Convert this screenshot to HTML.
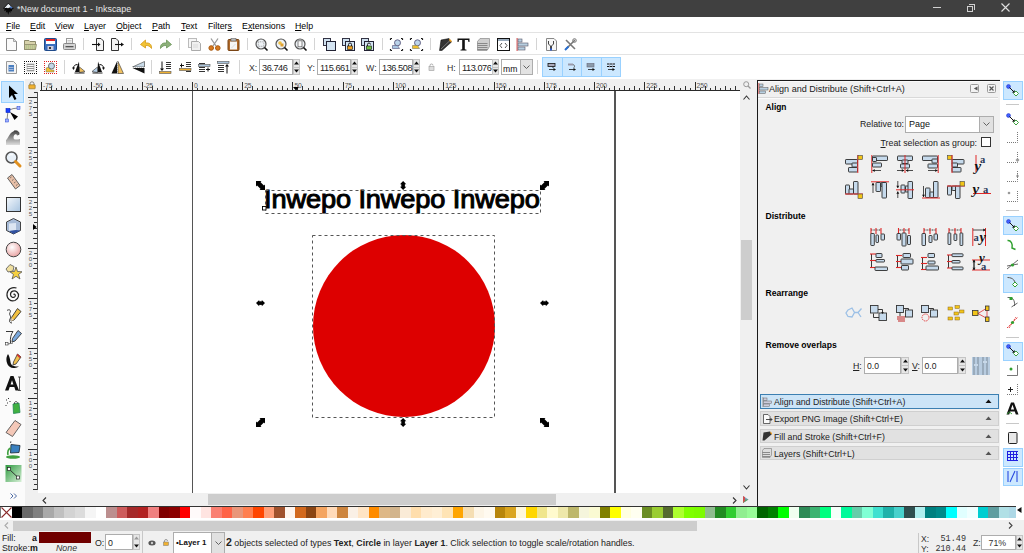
<!DOCTYPE html>
<html><head><meta charset="utf-8"><style>
*{margin:0;padding:0;box-sizing:border-box}
html,body{width:1024px;height:553px;overflow:hidden;background:#f0f0f0;font-family:"Liberation Sans",sans-serif;font-size:8.8px;color:#000}
.a{position:absolute}
svg{position:absolute;overflow:visible}
#title{left:0;top:0;width:1024px;height:17px;background:#404040}
#menu{left:0;top:17px;width:1024px;height:16px;background:#fff;border-bottom:1px solid #e3e3e3}
.mi{position:absolute;top:4px;white-space:nowrap;line-height:10px}
u{text-decoration:underline;text-underline-offset:1px}
#tb1{left:0;top:33px;width:1024px;height:22px;background:#fff;border-bottom:1px solid #e3e3e3}
#tb2{left:0;top:55px;width:1024px;height:24px;background:#fff}
.sep{position:absolute;width:1px;background:#d4d4d4}
#toolbox{left:0;top:79px;width:25px;height:427px;background:#fbfbfb}
#hruler{left:25px;top:79px;width:715px;height:12px;background:#f0f0f0}
#vruler{left:25px;top:91px;width:13px;height:402px;background:#f0f0f0}
#canvas{left:38px;top:91px;width:702px;height:402px;background:#fff;overflow:hidden}
#hscroll{left:25px;top:493px;width:731px;height:13px;background:#f0f0f0}
#vscroll{left:740px;top:79px;width:16px;height:414px;background:#f0f0f0}
#dock{left:756px;top:80px;width:244px;height:426px;background:#f0f0f0}
#snapbar{left:1000px;top:79px;width:24px;height:427px;background:#fff}
#palette{left:0;top:506px;width:1024px;height:14px;background:#fff}
#pscroll{left:0;top:520px;width:1024px;height:11px;background:#f0f0f0}
#status{left:0;top:531px;width:1024px;height:22px;background:#f0f0f0}
.sw{position:absolute;top:1px;height:11px}
.t{position:absolute;white-space:nowrap;line-height:10px}
.b{font-weight:bold}
</style></head><body>
<div id="title" class="a">
<svg style="left:1px;top:1px" width="15" height="15" viewBox="0 0 15 15"><path d="M7.3 2L12.8 7.3L11.5 8.6L11 8.3V10.5L9.8 9.8L9.3 12L8.2 10.5L7.3 14L6.3 10.8L4.8 11.8L5.2 9.3L3.2 10.2L3.6 8.2L2 7.3Z" fill="#050505"/><path d="M7.3 2.8L11.6 6.8L10 7.2L8.5 6.5L7 7.3L5.5 6.8L3.2 7.2Z" fill="#e8eef4"/><path d="M9.2 5L11.8 7L10.2 7.6L9 7Z" fill="#3a6ac0"/></svg>
<div class="t" style="left:17px;top:4px;color:#e6e6e6;font-size:8.95px">*New document 1 - Inkscape</div>
<div class="a" style="left:933px;top:7px;width:8px;height:1px;background:#d0d0d0"></div>
<div class="a" style="left:969px;top:4px;width:6px;height:6px;border:1px solid #d0d0d0;border-left:0;border-bottom:0"></div>
<div class="a" style="left:967px;top:6px;width:6px;height:6px;border:1px solid #d0d0d0"></div>
<svg style="left:1001px;top:3px" width="9" height="9" viewBox="0 0 9 9"><path d="M.5 .5L8.5 8.5M8.5 .5L.5 8.5" stroke="#e0e0e0" stroke-width="1.1"/></svg>
</div>
<div id="menu" class="a">
<span class="mi" style="left:6px"><u>F</u>ile</span>
<span class="mi" style="left:30px"><u>E</u>dit</span>
<span class="mi" style="left:55px"><u>V</u>iew</span>
<span class="mi" style="left:84px"><u>L</u>ayer</span>
<span class="mi" style="left:116px"><u>O</u>bject</span>
<span class="mi" style="left:152px"><u>P</u>ath</span>
<span class="mi" style="left:181px"><u>T</u>ext</span>
<span class="mi" style="left:208px">Filter<u>s</u></span>
<span class="mi" style="left:242px">E<u>x</u>tensions</span>
<span class="mi" style="left:295px"><u>H</u>elp</span>
</div>
<div id="tb1" class="a">
<svg style="left:5px;top:5px" width="13" height="13" viewBox="0 0 13 13"><path d="M1.5 .5H8.5L11.5 3.5V12.5H1.5Z" fill="#fbfbfb" stroke="#8a8a8a"/><path d="M8.5 .5V3.5H11.5" fill="#ddd" stroke="#8a8a8a" stroke-width=".7"/></svg>
<svg style="left:24px;top:5px" width="13" height="13" viewBox="0 0 13 13"><path d="M.5 2.5H5L6 3.5H11.5V11.5H.5Z" fill="#d8d3ac" stroke="#8c8a6a"/><path d="M.5 6.5H12.5L11.5 11.5H.5Z" fill="#c9c79b" stroke="#8c8a6a" stroke-width=".8"/><path d="M2 8h9M2 10h9" stroke="#9bc27a" stroke-width=".8" stroke-dasharray="1 1"/></svg>
<svg style="left:44px;top:5px" width="13" height="13" viewBox="0 0 13 13"><rect x=".5" y=".5" width="12" height="12" rx="1" fill="#3b6fbf" stroke="#1f4a8a"/><rect x="2" y="1" width="9" height="5" fill="#fff"/><rect x="2" y="1" width="9" height="2" fill="#e02020"/><rect x="3.5" y="8" width="6" height="4" fill="#ccd"/><rect x="5" y="9" width="2" height="2" fill="#333"/></svg>
<svg style="left:63px;top:5px" width="13" height="13" viewBox="0 0 13 13"><rect x="3.5" y=".5" width="6" height="5" fill="#fafafa" stroke="#999"/><path d="M4.5 2.5h4M4.5 4h4" stroke="#aaa" stroke-width=".6"/><rect x=".5" y="5.5" width="12" height="6" rx="1" fill="#d4d4d4" stroke="#888"/><rect x="2.5" y="8" width="8" height="1.3" fill="#555"/></svg>
<svg style="left:92px;top:5px" width="13" height="13" viewBox="0 0 13 13"><path d="M4.5 .5H9L11.5 3V12.5H4.5Z" fill="#f4f4f4" stroke="#333"/><path d="M0 6.5H7.5" stroke="#111" stroke-width="1.1"/><path d="M6 4.5L8.5 6.5L6 8.5Z" fill="#111"/></svg>
<svg style="left:111px;top:5px" width="13" height="13" viewBox="0 0 13 13"><path d="M.5 .5H5L7.5 3V12.5H.5Z" fill="#f4f4f4" stroke="#333"/><path d="M4 6.5H11.5" stroke="#111" stroke-width="1.1"/><path d="M10 4.5L13 6.5L10 8.5Z" fill="#111"/></svg>
<svg style="left:140px;top:5px" width="13" height="13" viewBox="0 0 13 13"><path d="M11.5 10.5C12 6 9 4.5 5.5 5V2L.5 6.5L5.5 10V7.5C8 7.3 9.8 8 11.5 10.5Z" fill="#f2c335" stroke="#d49a1a" stroke-width=".8"/></svg>
<svg style="left:159px;top:5px" width="13" height="13" viewBox="0 0 13 13"><path d="M1.5 10.5C1 6 4 4.5 7.5 5V2L12.5 6.5L7.5 10V7.5C5 7.3 3.2 8 1.5 10.5Z" fill="#8db07a" stroke="#6b9559" stroke-width=".8"/></svg>
<svg style="left:188px;top:5px" width="13" height="13" viewBox="0 0 13 13"><rect x=".5" y=".5" width="8" height="9" fill="#f6f6f6" stroke="#bbb"/><path d="M3.5 3.5H10.5L12.5 5.5V12.5H3.5Z" fill="#f0f0f0" stroke="#aaa"/><path d="M5 7h5M5 9h5" stroke="#ccc" stroke-width=".6"/></svg>
<svg style="left:208px;top:5px" width="13" height="13" viewBox="0 0 13 13"><path d="M3 .5L8 8M10 .5L5 8" stroke="#9a9a9a" stroke-width="1.3"/><circle cx="3.2" cy="10" r="2.3" fill="#d87a20" stroke="#a85a10"/><circle cx="9.8" cy="10" r="2.3" fill="#d87a20" stroke="#a85a10"/></svg>
<svg style="left:227px;top:5px" width="13" height="13" viewBox="0 0 13 13"><rect x="1" y="1.5" width="11" height="11" rx="1" fill="#b06a2a" stroke="#7a4515"/><rect x="3" y="3.5" width="7" height="8" fill="#f6f6f6"/><rect x="4" y=".5" width="5" height="2.5" fill="#bbb" stroke="#666" stroke-width=".6"/><path d="M4.5 10L8.5 6" stroke="#ccc" stroke-width=".6"/></svg>
<svg style="left:255px;top:5px" width="13" height="13" viewBox="0 0 13 13"><circle cx="6" cy="6" r="5" fill="#eef2f6" stroke="#555" stroke-width="1.2"/><rect x="3.3" y="3.8" width="5.5" height="4.5" fill="none" stroke="#777" stroke-width=".6" stroke-dasharray="1 .7"/><path d="M9.5 9.5L12.5 12.5" stroke="#111" stroke-width="1.6"/></svg>
<svg style="left:274.5px;top:5px" width="13" height="13" viewBox="0 0 13 13"><circle cx="6" cy="6" r="5" fill="#eef2f6" stroke="#555" stroke-width="1.2"/><circle cx="5" cy="5" r="1.8" fill="#f0c040"/><rect x="5.5" y="5.5" width="3" height="3" fill="#e0a030"/><path d="M9.5 9.5L12.5 12.5" stroke="#111" stroke-width="1.6"/></svg>
<svg style="left:294px;top:5px" width="13" height="13" viewBox="0 0 13 13"><circle cx="6" cy="6" r="5" fill="#eef2f6" stroke="#555" stroke-width="1.2"/><rect x="4" y="2.8" width="4" height="6" fill="#fafafa" stroke="#555" stroke-width=".7"/><path d="M9.5 9.5L12.5 12.5" stroke="#111" stroke-width="1.6"/></svg>
<svg style="left:323px;top:5px" width="13" height="13" viewBox="0 0 13 13"><rect x=".5" y=".5" width="7" height="7" fill="#cfe0ef" stroke="#334"/><rect x="3.5" y="3.5" width="9" height="9" fill="#d4e4f2" stroke="#223"/></svg>
<svg style="left:342px;top:5px" width="13" height="13" viewBox="0 0 13 13"><rect x=".5" y=".5" width="7" height="7" fill="#cfe0ef" stroke="#334"/><rect x="3.5" y="3.5" width="9" height="9" fill="#d4e4f2" stroke="#223"/><path d="M6.5 8V6.5a1.5 1.5 0 0 1 3 0V8" fill="none" stroke="#111" stroke-width=".9"/><rect x="5.5" y="8" width="5" height="3.5" fill="#f0a020" stroke="#111" stroke-width=".6"/></svg>
<svg style="left:361px;top:5px" width="13" height="13" viewBox="0 0 13 13"><rect x=".5" y=".5" width="7" height="7" fill="#cfe0ef" stroke="#334"/><rect x="3.5" y="3.5" width="9" height="9" fill="#d4e4f2" stroke="#223"/><path d="M6.5 8V6.5a1.5 1.5 0 0 1 3 0" fill="none" stroke="#111" stroke-width=".9"/><rect x="5.5" y="8" width="5" height="3.5" fill="#70c040" stroke="#111" stroke-width=".6"/></svg>
<svg style="left:390px;top:5px" width="13" height="13" viewBox="0 0 13 13"><path d="M.5 .5h1.5M.5 .5v1.5M12.5 .5h-1.5M12.5 .5v1.5M.5 12.5h1.5M.5 12.5v-1.5M12.5 12.5h-1.5M12.5 12.5v-1.5" stroke="#111" stroke-width="1.2"/><circle cx="7.5" cy="4.8" r="3" fill="#bcd4ea" stroke="#668"/><path d="M2.5 7.5H7.5L9.5 10.5H2.5Z" fill="#a9c6e2" stroke="#668" stroke-width=".7"/></svg>
<svg style="left:410px;top:5px" width="13" height="13" viewBox="0 0 13 13"><path d="M.5 .5h1.5M.5 .5v1.5M12.5 .5h-1.5M12.5 .5v1.5M.5 12.5h1.5M.5 12.5v-1.5M12.5 12.5h-1.5M12.5 12.5v-1.5" stroke="#111" stroke-width="1.2"/><circle cx="7.5" cy="4.8" r="3" fill="#bcd4ea" stroke="#668"/><path d="M2.5 7.5H7.5L9.5 10.5H2.5Z" fill="#f0c030" stroke="#886" stroke-width=".7"/></svg>
<svg style="left:438.6px;top:5px" width="13" height="13" viewBox="0 0 13 13"><path d="M.5 12.5L2 2L10 .5L12.5 4L3 12.5Z" fill="#333" stroke="#000" stroke-width=".5"/><path d="M2 11L11 2.5" stroke="#fff" stroke-width=".6" opacity=".6"/><path d="M10 .5L12.5 2.5L12.5 4.5L10.5 3Z" fill="#f0a020"/></svg>
<svg style="left:457px;top:5px" width="13" height="13" viewBox="0 0 13 13"><path d="M.5 .5H12.5V4H11.5L11 2H7.8V11.2L9.5 11.8V12.5H3.5V11.8L5.2 11.2V2H2L1.5 4H.5Z" fill="#111"/></svg>
<svg style="left:477px;top:5px" width="13" height="13" viewBox="0 0 13 13"><path d="M.5 3.5L3 .5H12.5V8.5L10 12.5H.5Z" fill="#cfcfcf" stroke="#888" stroke-width=".7"/><path d="M.5 5.5H10.5M.5 7.5H10.5M.5 9.5H10.5M.5 11.5H10.5" stroke="#777" stroke-width=".8"/></svg>
<svg style="left:496.7px;top:5px" width="13" height="13" viewBox="0 0 13 13"><rect x=".5" y=".5" width="12" height="12" fill="#fff" stroke="#111"/><rect x="1" y="1" width="11" height="2" fill="#9ab"/><path d="M5 5L3 7.5L5 10M8 5L10 7.5L8 10" fill="none" stroke="#555" stroke-width="1"/></svg>
<svg style="left:516px;top:5px" width="13" height="13" viewBox="0 0 13 13"><rect x=".5" y="0" width="1.2" height="13" fill="#e06060"/><rect x="2" y="1" width="4" height="3" fill="#b8cfe0" stroke="#556" stroke-width=".6"/><rect x="2" y="5" width="10" height="3" fill="#b8cfe0" stroke="#556" stroke-width=".6"/><rect x="2" y="9" width="7" height="3" fill="#b8cfe0" stroke="#556" stroke-width=".6"/></svg>
<svg style="left:545px;top:5px" width="13" height="13" viewBox="0 0 13 13"><path d="M1.5 .5H9L11.5 3V12.5H1.5Z" fill="#f6f6f6" stroke="#888"/><path d="M3.5 3V6L5.5 8V12M8.5 3V6L6.5 8V12" fill="none" stroke="#444" stroke-width="1"/><path d="M5 10.5h2v2h-2z" fill="#2a5bd0"/></svg>
<svg style="left:564px;top:5px" width="13" height="13" viewBox="0 0 13 13"><path d="M2 2L11 11M11 2L2 11" stroke="#777" stroke-width="1.6"/><circle cx="10.5" cy="2.5" r="1.8" fill="none" stroke="#777" stroke-width="1"/><path d="M1 12L4.5 8.5" stroke="#2a6fd0" stroke-width="2"/></svg>
<div class="sep" style="left:83px;top:5px;height:12px"></div>
<div class="sep" style="left:131px;top:5px;height:12px"></div>
<div class="sep" style="left:179px;top:5px;height:12px"></div>
<div class="sep" style="left:247px;top:5px;height:12px"></div>
<div class="sep" style="left:314px;top:5px;height:12px"></div>
<div class="sep" style="left:382px;top:5px;height:12px"></div>
<div class="sep" style="left:430px;top:5px;height:12px"></div>
<div class="sep" style="left:536px;top:5px;height:12px"></div>
</div>
<div id="tb2" class="a">
<svg style="left:5px;top:6px" width="13" height="13" viewBox="0 0 13 13"><path d="M1.5 .5H8.5L11.5 3.5V12.5H1.5Z" fill="#f4f4f4" stroke="#999"/><rect x="3.5" y="4" width="5.5" height="6.5" fill="#4a7fc0"/><path d="M4 6.5h4.5M4 8.5h4.5" stroke="#dde" stroke-width=".6"/></svg>
<svg style="left:24px;top:6px" width="13" height="13" viewBox="0 0 13 13"><rect x="1" y="1" width="11" height="11" fill="#fafafa"/><rect x="0" y="0" width="1" height="1" fill="#111"/><rect x="0" y="12" width="1" height="1" fill="#111"/><rect x="0" y="0" width="1" height="1" fill="#111"/><rect x="12" y="0" width="1" height="1" fill="#111"/><rect x="2" y="0" width="1" height="1" fill="#111"/><rect x="2" y="12" width="1" height="1" fill="#111"/><rect x="0" y="2" width="1" height="1" fill="#111"/><rect x="12" y="2" width="1" height="1" fill="#111"/><rect x="4" y="0" width="1" height="1" fill="#111"/><rect x="4" y="12" width="1" height="1" fill="#111"/><rect x="0" y="4" width="1" height="1" fill="#111"/><rect x="12" y="4" width="1" height="1" fill="#111"/><rect x="6" y="0" width="1" height="1" fill="#111"/><rect x="6" y="12" width="1" height="1" fill="#111"/><rect x="0" y="6" width="1" height="1" fill="#111"/><rect x="12" y="6" width="1" height="1" fill="#111"/><rect x="8" y="0" width="1" height="1" fill="#111"/><rect x="8" y="12" width="1" height="1" fill="#111"/><rect x="0" y="8" width="1" height="1" fill="#111"/><rect x="12" y="8" width="1" height="1" fill="#111"/><rect x="10" y="0" width="1" height="1" fill="#111"/><rect x="10" y="12" width="1" height="1" fill="#111"/><rect x="0" y="10" width="1" height="1" fill="#111"/><rect x="12" y="10" width="1" height="1" fill="#111"/><rect x="12" y="0" width="1" height="1" fill="#111"/><rect x="12" y="12" width="1" height="1" fill="#111"/><rect x="0" y="12" width="1" height="1" fill="#111"/><rect x="12" y="12" width="1" height="1" fill="#111"/><path d="M3 3.5h7M3 5.5h7M3 7.5h7M3 9.5h7" stroke="#888" stroke-width=".9"/><rect x="3" y="3" width="7" height="7" fill="none" stroke="#999" stroke-width=".6"/></svg>
<svg style="left:44px;top:6px" width="13" height="13" viewBox="0 0 13 13"><rect x="1" y="1" width="11" height="11" fill="#fff"/><rect x="0" y="0" width="1" height="1" fill="#e02020"/><rect x="0" y="12" width="1" height="1" fill="#e02020"/><rect x="0" y="0" width="1" height="1" fill="#e02020"/><rect x="12" y="0" width="1" height="1" fill="#e02020"/><rect x="2" y="0" width="1" height="1" fill="#e02020"/><rect x="2" y="12" width="1" height="1" fill="#e02020"/><rect x="0" y="2" width="1" height="1" fill="#e02020"/><rect x="12" y="2" width="1" height="1" fill="#e02020"/><rect x="4" y="0" width="1" height="1" fill="#e02020"/><rect x="4" y="12" width="1" height="1" fill="#e02020"/><rect x="0" y="4" width="1" height="1" fill="#e02020"/><rect x="12" y="4" width="1" height="1" fill="#e02020"/><rect x="6" y="0" width="1" height="1" fill="#e02020"/><rect x="6" y="12" width="1" height="1" fill="#e02020"/><rect x="0" y="6" width="1" height="1" fill="#e02020"/><rect x="12" y="6" width="1" height="1" fill="#e02020"/><rect x="8" y="0" width="1" height="1" fill="#e02020"/><rect x="8" y="12" width="1" height="1" fill="#e02020"/><rect x="0" y="8" width="1" height="1" fill="#e02020"/><rect x="12" y="8" width="1" height="1" fill="#e02020"/><rect x="10" y="0" width="1" height="1" fill="#e02020"/><rect x="10" y="12" width="1" height="1" fill="#e02020"/><rect x="0" y="10" width="1" height="1" fill="#e02020"/><rect x="12" y="10" width="1" height="1" fill="#e02020"/><rect x="12" y="0" width="1" height="1" fill="#e02020"/><rect x="12" y="12" width="1" height="1" fill="#e02020"/><rect x="0" y="12" width="1" height="1" fill="#e02020"/><rect x="12" y="12" width="1" height="1" fill="#e02020"/><path d="M2 7L5 6L7 9H10V11H2Z" fill="#f0c030" stroke="#777" stroke-width=".5"/><circle cx="7.5" cy="5" r="3" fill="#c4d8ea" stroke="#555" stroke-width=".8"/></svg>
<svg style="left:72px;top:6px" width="13" height="13" viewBox="0 0 13 13"><path d="M7 .5L7.5 11H3Z" fill="#111"/><path d="M7.5 6L13 10.5L7.5 11.5Z" fill="#f0c060" stroke="#333" stroke-width=".6"/><path d="M5.5 3.5C3 3.5 1.5 5 1.5 7" fill="none" stroke="#111" stroke-width="1"/><path d="M0 6.5H3L1.5 9Z" fill="#111"/><path d="M2.5 12H12.5" stroke="#222" stroke-width="1"/></svg>
<svg style="left:92px;top:6px" width="13" height="13" viewBox="0 0 13 13"><path d="M6 .5L5.5 11H10Z" fill="#111"/><path d="M5.5 6L0 10.5L5.5 11.5Z" fill="#b8d2ea" stroke="#333" stroke-width=".6"/><path d="M7.5 3.5C10 3.5 11.5 5 11.5 7" fill="none" stroke="#111" stroke-width="1"/><path d="M10 6.5H13L11.5 9Z" fill="#111"/><path d="M.5 12H10.5" stroke="#222" stroke-width="1"/></svg>
<svg style="left:111px;top:6px" width="13" height="13" viewBox="0 0 13 13"><path d="M6 .5L6 12.5H.5Z" fill="#111"/><path d="M7 .5L7 12.5H12.5Z" fill="#f0c060" stroke="#333" stroke-width=".6"/><path d="M6.5 0v13" stroke="#777" stroke-width=".6" stroke-dasharray="1 1"/></svg>
<svg style="left:132px;top:6px" width="13" height="13" viewBox="0 0 13 13"><path d="M12.5 .5V6H.5Z" fill="#c9dbe9" stroke="#333" stroke-width=".6"/><path d="M12.5 12.5V7H.5Z" fill="#111"/><path d="M0 6.5h13" stroke="#fff" stroke-width=".8" stroke-dasharray="1 1"/></svg>
<svg style="left:159px;top:6px" width="13" height="13" viewBox="0 0 13 13"><path d="M3 .5V9" stroke="#111" stroke-width="1"/><path d="M1 7.5h4L3 10z" fill="#111"/><path d="M7 1.5h5M7 3.5h5M7 5.5h5M7 7.5h5" stroke="#333" stroke-width="1.1"/><rect x=".5" y="10.5" width="11.5" height="2" fill="#f0b030" stroke="#555" stroke-width=".6"/></svg>
<svg style="left:179px;top:6px" width="13" height="13" viewBox="0 0 13 13"><path d="M1 4.5h4" stroke="#111"/><path d="M2.5 2.5v4" stroke="#111"/><path d="M7 1.5h5M7 3.5h5M7 5.5h5M7 10.5h5" stroke="#333" stroke-width="1.1"/><rect x=".5" y="7.5" width="11.5" height="2" fill="#f0b030" stroke="#555" stroke-width=".6"/></svg>
<svg style="left:198px;top:6px" width="13" height="13" viewBox="0 0 13 13"><path d="M8 8.5h4" stroke="#111"/><path d="M10 6.5v4" stroke="#111"/><path d="M1 2.5h6M1 6.5h6M1 8.5h6M1 10.5h6" stroke="#333" stroke-width="1.1"/><rect x=".5" y="3.5" width="11.5" height="2" fill="#aac4dc" stroke="#555" stroke-width=".6"/></svg>
<svg style="left:217px;top:6px" width="13" height="13" viewBox="0 0 13 13"><path d="M10 4V12.5" stroke="#111" stroke-width="1"/><path d="M8 5.5h4L10 3z" fill="#111"/><path d="M1 4.5h6M1 6.5h6M1 8.5h6M1 10.5h6" stroke="#333" stroke-width="1.1"/><rect x=".5" y=".5" width="11.5" height="2" fill="#aac4dc" stroke="#555" stroke-width=".6"/></svg>
<div class="sep" style="left:64px;top:5px;height:14px"></div>
<div class="sep" style="left:151px;top:5px;height:14px"></div>
<div class="sep" style="left:239px;top:5px;height:14px"></div>
<div class="sep" style="left:537px;top:5px;height:14px"></div>
<div class="t" style="left:249px;top:8px;color:#333">X:</div>
<div class="a" style="left:259px;top:4px;width:34px;height:16px;background:#fff;border:1px solid #adadad"></div><div class="t" style="left:262px;top:8px;font-size:9.2px;color:#222;letter-spacing:-.45px">36.746</div>
<div class="a" style="left:293px;top:4px;width:7px;height:16px;background:#e6e6e6;border:1px solid #c4c4c4"></div><div class="a" style="left:293px;top:12px;width:7px;height:1px;background:#c4c4c4"></div><svg style="left:294px;top:6px" width="5" height="4" viewBox="0 0 5 4"><path d="M2.5 .5L5 3.5H0Z" fill="#111"/></svg><svg style="left:294px;top:14px" width="5" height="4" viewBox="0 0 5 4"><path d="M2.5 3.5L5 .5H0Z" fill="#111"/></svg>
<div class="t" style="left:307px;top:8px;color:#333">Y:</div>
<div class="a" style="left:317px;top:4px;width:34px;height:16px;background:#fff;border:1px solid #adadad"></div><div class="t" style="left:320px;top:8px;font-size:9.2px;color:#222;letter-spacing:-.45px">115.661</div>
<div class="a" style="left:351px;top:4px;width:7px;height:16px;background:#e6e6e6;border:1px solid #c4c4c4"></div><div class="a" style="left:351px;top:12px;width:7px;height:1px;background:#c4c4c4"></div><svg style="left:352px;top:6px" width="5" height="4" viewBox="0 0 5 4"><path d="M2.5 .5L5 3.5H0Z" fill="#111"/></svg><svg style="left:352px;top:14px" width="5" height="4" viewBox="0 0 5 4"><path d="M2.5 3.5L5 .5H0Z" fill="#111"/></svg>
<div class="t" style="left:366px;top:8px;color:#333">W:</div>
<div class="a" style="left:379px;top:4px;width:34px;height:16px;background:#fff;border:1px solid #adadad"></div><div class="t" style="left:382px;top:8px;font-size:9.2px;color:#222;letter-spacing:-.45px">136.508</div>
<div class="a" style="left:413px;top:4px;width:7px;height:16px;background:#e6e6e6;border:1px solid #c4c4c4"></div><div class="a" style="left:413px;top:12px;width:7px;height:1px;background:#c4c4c4"></div><svg style="left:414px;top:6px" width="5" height="4" viewBox="0 0 5 4"><path d="M2.5 .5L5 3.5H0Z" fill="#111"/></svg><svg style="left:414px;top:14px" width="5" height="4" viewBox="0 0 5 4"><path d="M2.5 3.5L5 .5H0Z" fill="#111"/></svg>
<svg style="left:428px;top:8px" width="7" height="8" viewBox="0 0 7 8"><path d="M2 3.5V2.5a1.5 1.5 0 0 1 3 0" fill="none" stroke="#999" stroke-width=".8"/><rect x="1" y="3.5" width="5" height="4" fill="#ddd" stroke="#999" stroke-width=".6"/></svg>
<div class="t" style="left:447px;top:8px;color:#333">H:</div>
<div class="a" style="left:459px;top:4px;width:34px;height:16px;background:#fff;border:1px solid #adadad"></div><div class="t" style="left:462px;top:8px;font-size:9.2px;color:#222;letter-spacing:-.45px">113.076</div>
<div class="a" style="left:492px;top:4px;width:7px;height:16px;background:#e6e6e6;border:1px solid #c4c4c4"></div><div class="a" style="left:492px;top:12px;width:7px;height:1px;background:#c4c4c4"></div><svg style="left:493px;top:6px" width="5" height="4" viewBox="0 0 5 4"><path d="M2.5 .5L5 3.5H0Z" fill="#111"/></svg><svg style="left:493px;top:14px" width="5" height="4" viewBox="0 0 5 4"><path d="M2.5 3.5L5 .5H0Z" fill="#111"/></svg>
<div class="a" style="left:501px;top:4px;width:32px;height:16px;background:#fff;border:1px solid #adadad"></div>
<div class="a" style="left:520px;top:4px;width:13px;height:16px;background:#e3e3e3;border:1px solid #adadad"></div>
<svg style="left:523px;top:10px" width="7" height="4" viewBox="0 0 7 4"><path d="M.5 .5L3.5 3.5L6.5 .5" fill="none" stroke="#555" stroke-width=".9"/></svg>
<div class="t" style="left:503px;top:9px;font-size:8.6px;color:#111">mm</div>
<div class="a" style="left:542px;top:2px;width:78.5px;height:19.5px;background:#cce8ff;border:1px solid #99d1ff"></div>
<div class="a" style="left:561.6px;top:2px;width:1px;height:19.5px;background:#99d1ff"></div>
<div class="a" style="left:581.2px;top:2px;width:1px;height:19.5px;background:#99d1ff"></div>
<div class="a" style="left:600.8px;top:2px;width:1px;height:19.5px;background:#99d1ff"></div>
<svg style="left:548.0px;top:8px" width="8" height="8" viewBox="0 0 8 8"><rect x="0" y=".5" width="7" height="3" fill="#aab" stroke="#111" stroke-width=".8"/><path d="M5 3.5V5" stroke="#111" stroke-width=".8"/><path d="M1 6.5H6" stroke="#111" stroke-width=".8"/><path d="M5.5 5L8 6.5L5.5 8Z" fill="#111"/></svg>
<svg style="left:567.6px;top:8px" width="8" height="8" viewBox="0 0 8 8"><rect x="0" y=".5" width="5" height="2" fill="#99a" /><path d="M5 1.5C7 2 7 4 5.5 5" fill="none" stroke="#555" stroke-width=".8"/><path d="M1 6.5H6" stroke="#111" stroke-width=".8"/><path d="M5.5 5L8 6.5L5.5 8Z" fill="#111"/></svg>
<svg style="left:587.2px;top:8px" width="8" height="8" viewBox="0 0 8 8"><rect x="0" y=".5" width="7" height="3.5" fill="#8a9aaa" stroke="#667" stroke-width=".6"/><path d="M1 6.5H6" stroke="#111" stroke-width=".8"/><path d="M5.5 5L8 6.5L5.5 8Z" fill="#111"/></svg>
<svg style="left:606.8px;top:8px" width="8" height="8" viewBox="0 0 8 8"><path d="M0 1H8M0 3.5H8" stroke="#111" stroke-width="1.1"/><path d="M2.5 0V4.5M5.5 0V4.5" stroke="#aab" stroke-width=".8"/><path d="M1 6.5H6" stroke="#111" stroke-width=".8"/><path d="M5.5 5L8 6.5L5.5 8Z" fill="#111"/></svg>
</div>
<div id="toolbox" class="a">
<div class="a" style="left:1px;top:2px;width:23px;height:22px;background:#cce8ff;border:1px solid #99d1ff"></div>
<svg style="left:3.5px;top:4px" width="19" height="19" viewBox="0 0 19 19"><path d="M5 2.5L5 15L8 12L10.5 17L12.5 16L10 11L14 11Z" fill="#000"/></svg>
<svg style="left:3.5px;top:26px" width="19" height="19" viewBox="0 0 19 19"><path d="M4 5.5Q9 3 14 3" fill="none" stroke="#555" stroke-width=".7"/><path d="M4 5.5L3 15" fill="none" stroke="#555" stroke-width=".7"/><rect x="2" y="3.5" width="4" height="4" fill="#1a3fff" stroke="#0020c0" stroke-width=".6"/><rect x="13" y="1.5" width="3" height="3" fill="#9fb0ff" stroke="#2040d0" stroke-width=".5"/><rect x="1.5" y="14" width="3" height="3" fill="#9fb0ff" stroke="#2040d0" stroke-width=".5"/><path d="M6 7L14 11.5L10.5 15Z" fill="#000"/></svg>
<svg style="left:3.5px;top:49px" width="19" height="19" viewBox="0 0 19 19"><defs><linearGradient id="gw" x1="0" y1="0" x2="0" y2="1"><stop offset="0" stop-color="#444"/><stop offset="1" stop-color="#ddd"/></linearGradient></defs><path d="M2 12C4 11 5 5 10 3C14 2 16 5 14.5 7C13.5 8 12 7 12.5 6C10 6 9 9 10 11C11 12 14 11.5 16 11V17H2Z" fill="url(#gw)"/><path d="M10 3C14 2 16 5 14.5 7" fill="none" stroke="#333" stroke-width=".8"/></svg>
<svg style="left:3.5px;top:71px" width="19" height="19" viewBox="0 0 19 19"><circle cx="7.5" cy="7.5" r="5.5" fill="#e8f0f8" stroke="#555" stroke-width="1.5"/><path d="M5 5.5Q7 4 9 5" stroke="#fff" stroke-width="1" fill="none"/><path d="M11.5 11.5L16 16" stroke="#e09020" stroke-width="3" stroke-linecap="round"/></svg>
<svg style="left:3.5px;top:94px" width="19" height="19" viewBox="0 0 19 19"><path d="M3.5 5L8 1.5L16 12.5L11.5 16Z" fill="#e8c0a8" stroke="#555" stroke-width=".9"/><path d="M6 5L7.5 4M8 7.5L9.5 6.5M10 10L11.5 9M12 12.5L13.5 11.5" stroke="#555" stroke-width=".7"/></svg>
<svg style="left:3.5px;top:116px" width="19" height="19" viewBox="0 0 19 19"><defs><linearGradient id="gr" x1="0" y1="0" x2="1" y2="1"><stop offset="0" stop-color="#f4f8fc"/><stop offset="1" stop-color="#a8c4e0"/></linearGradient></defs><rect x="2.5" y="2.5" width="14" height="14" fill="url(#gr)" stroke="#333" stroke-width="1"/></svg>
<svg style="left:3.5px;top:138px" width="19" height="19" viewBox="0 0 19 19"><path d="M9.5 1.5L16.5 5V13.5L9.5 17L2.5 13.5V5Z" fill="#a8bcd8" stroke="#333" stroke-width=".9"/><path d="M5 6.5L12 6V13L5 14Z" fill="#dde6f2"/><path d="M5 14L12 13L16.5 13.5L9.5 17Z" fill="#3050a0"/></svg>
<svg style="left:3.5px;top:161px" width="19" height="19" viewBox="0 0 19 19"><defs><radialGradient id="gc" cx=".4" cy=".35" r=".7"><stop offset="0" stop-color="#fff"/><stop offset="1" stop-color="#e8a0a0"/></radialGradient></defs><circle cx="9.5" cy="9.5" r="7.3" fill="url(#gc)" stroke="#444" stroke-width="1"/></svg>
<svg style="left:3.5px;top:183px" width="19" height="19" viewBox="0 0 19 19"><path d="M2 7L6 2.5L10 4.5L9 9L4 10Z" fill="#f0e0a0" stroke="#555" stroke-width=".8"/><path d="M12 5L13.5 9.5L18 9.8L14.5 12.5L16 17L12 14.3L8 17L9.5 12.5L6 9.8L10.5 9.5Z" fill="#f6d040" stroke="#555" stroke-width=".8"/></svg>
<svg style="left:3.5px;top:206px" width="19" height="19" viewBox="0 0 19 19"><path d="M9.5 9.5C10.5 8.5 12 10 11 11.5C9.5 13.5 6.5 12 6.5 9.5C6.5 6 10.5 5 13 7C15.5 9 15 14 11 15.5C6.5 17 2.5 13.5 3 9C3.5 4 8.5 1.5 12.5 3" fill="none" stroke="#222" stroke-width="1.2"/></svg>
<svg style="left:3.5px;top:228px" width="19" height="19" viewBox="0 0 19 19"><path d="M3 3.5C5 2 7.5 3 6 5.5C4.5 8 8 9 6 12C5 14 5.5 16 8 16" fill="none" stroke="#222" stroke-width=".9"/><path d="M13.5 1.5L17 4.5L10 13L7 14L7.5 10.5Z" fill="#f2c040" stroke="#333" stroke-width=".9"/><path d="M7.5 10.5L10 13L7 14Z" fill="#f0d8b0"/></svg>
<svg style="left:3.5px;top:250px" width="19" height="19" viewBox="0 0 19 19"><path d="M2 2.5H9C7 5 6 9 6.5 14" fill="none" stroke="#222" stroke-width=".9"/><rect x="1.5" y="13.5" width="2.5" height="2.5" fill="#fff" stroke="#333" stroke-width=".6"/><path d="M4 15L9 14" stroke="#333" stroke-width=".7"/><path d="M14 1.5L17.5 4.5L11 12L8 13L8.5 9.5Z" fill="#7aa8dc" stroke="#333" stroke-width=".9"/></svg>
<svg style="left:3.5px;top:273px" width="19" height="19" viewBox="0 0 19 19"><path d="M4 2C1 6 2.5 13 6 15C8 16.5 11 16.5 15 14.5C11 15 7 14 6.5 10C6 7 5.5 4 4 2Z" fill="#111"/><path d="M13.5 2L17 5L12 12L9 13L9.5 10Z" fill="#f0c050" stroke="#333" stroke-width=".8"/><path d="M13.5 2L17 5L15.5 6L12.5 3Z" fill="#d03030"/></svg>
<svg style="left:3.5px;top:295px" width="19" height="19" viewBox="0 0 19 19"><path d="M1 16.5L6.5 2H9.5L15 16.5H11.5L10.3 13H5.7L4.5 16.5ZM6.6 10.5H9.4L8 6.3Z" fill="#111"/><path d="M15.5 3V16.5M14 3h3M14 16.5h3" stroke="#333" stroke-width=".8"/></svg>
<svg style="left:3.5px;top:318px" width="19" height="19" viewBox="0 0 19 19"><path d="M2 3h1M4 1.5h1M3 6h1M5.5 4.5h1M1.5 8.5h1" stroke="#333" stroke-width="1"/><path d="M9 7L15 6L16 15.5L9.5 16.5Z" fill="#40b040" stroke="#285" stroke-width=".8"/><path d="M10.5 7C10 4 13.5 3.5 13.5 6.5" fill="none" stroke="#333" stroke-width=".8"/></svg>
<svg style="left:3.5px;top:340px" width="19" height="19" viewBox="0 0 19 19"><path d="M11 1.5L17 5.5L8.5 17.5L2 13.5Z" fill="#f4c8b8" stroke="#555" stroke-width=".9"/></svg>
<svg style="left:3.5px;top:362px" width="19" height="19" viewBox="0 0 19 19"><path d="M7 3.5L16 4.5L15 11.5L6.5 12Z" fill="#3a80c0" stroke="#234" stroke-width=".9"/><path d="M6.5 7Q3 9 4 14" fill="none" stroke="#40a040" stroke-width="1.6"/><ellipse cx="9" cy="16" rx="7" ry="1.8" fill="#40a040"/><path d="M6.5 2Q6 0 7.5 1" stroke="#333" fill="none" stroke-width=".7"/></svg>
<svg style="left:3.5px;top:385px" width="19" height="19" viewBox="0 0 19 19"><defs><linearGradient id="gg" x1="0" y1="0" x2="1" y2="1"><stop offset="0" stop-color="#2e9a40"/><stop offset="1" stop-color="#d8f0d8"/></linearGradient></defs><rect x="1.5" y="1" width="16" height="17" fill="url(#gg)"/><path d="M5 5L14 13.5" stroke="#222" stroke-width=".9"/><rect x="3.5" y="3.5" width="3" height="3" fill="#fff" stroke="#222" stroke-width=".7"/><rect x="12.5" y="12" width="3" height="3" fill="#fff" stroke="#222" stroke-width=".7"/></svg>
<svg style="left:10px;top:414px" width="8" height="6" viewBox="0 0 8 6"><path d="M.5 .5L3 3L.5 5.5M4 .5L6.5 3L4 5.5" fill="none" stroke="#3a5a9a" stroke-width=".9"/></svg>
</div>
<div id="hruler" class="a">
<div class="a" style="left:16.09px;top:2.5px;width:1px;height:9px;background:#2a2a2a"></div><div class="a" style="left:18.09px;top:2.5px;font-size:6.8px;line-height:7px;color:#555;white-space:nowrap;letter-spacing:-.2px">-75</div><div class="a" style="left:21.12px;top:8.5px;width:1px;height:3px;background:#333"></div><div class="a" style="left:26.14px;top:7px;width:1px;height:4.5px;background:#333"></div><div class="a" style="left:31.17px;top:8.5px;width:1px;height:3px;background:#333"></div><div class="a" style="left:36.20px;top:7px;width:1px;height:4.5px;background:#333"></div><div class="a" style="left:41.23px;top:8.5px;width:1px;height:3px;background:#333"></div><div class="a" style="left:46.25px;top:7px;width:1px;height:4.5px;background:#333"></div><div class="a" style="left:51.28px;top:8.5px;width:1px;height:3px;background:#333"></div><div class="a" style="left:56.31px;top:7px;width:1px;height:4.5px;background:#333"></div><div class="a" style="left:61.33px;top:8.5px;width:1px;height:3px;background:#333"></div><div class="a" style="left:66.36px;top:2.5px;width:1px;height:9px;background:#2a2a2a"></div><div class="a" style="left:68.36px;top:2.5px;font-size:6.8px;line-height:7px;color:#555;white-space:nowrap;letter-spacing:-.2px">-50</div><div class="a" style="left:71.39px;top:8.5px;width:1px;height:3px;background:#333"></div><div class="a" style="left:76.41px;top:7px;width:1px;height:4.5px;background:#333"></div><div class="a" style="left:81.44px;top:8.5px;width:1px;height:3px;background:#333"></div><div class="a" style="left:86.47px;top:7px;width:1px;height:4.5px;background:#333"></div><div class="a" style="left:91.50px;top:8.5px;width:1px;height:3px;background:#333"></div><div class="a" style="left:96.52px;top:7px;width:1px;height:4.5px;background:#333"></div><div class="a" style="left:101.55px;top:8.5px;width:1px;height:3px;background:#333"></div><div class="a" style="left:106.58px;top:7px;width:1px;height:4.5px;background:#333"></div><div class="a" style="left:111.60px;top:8.5px;width:1px;height:3px;background:#333"></div><div class="a" style="left:116.63px;top:2.5px;width:1px;height:9px;background:#2a2a2a"></div><div class="a" style="left:118.63px;top:2.5px;font-size:6.8px;line-height:7px;color:#555;white-space:nowrap;letter-spacing:-.2px">-25</div><div class="a" style="left:121.66px;top:8.5px;width:1px;height:3px;background:#333"></div><div class="a" style="left:126.68px;top:7px;width:1px;height:4.5px;background:#333"></div><div class="a" style="left:131.71px;top:8.5px;width:1px;height:3px;background:#333"></div><div class="a" style="left:136.74px;top:7px;width:1px;height:4.5px;background:#333"></div><div class="a" style="left:141.77px;top:8.5px;width:1px;height:3px;background:#333"></div><div class="a" style="left:146.79px;top:7px;width:1px;height:4.5px;background:#333"></div><div class="a" style="left:151.82px;top:8.5px;width:1px;height:3px;background:#333"></div><div class="a" style="left:156.85px;top:7px;width:1px;height:4.5px;background:#333"></div><div class="a" style="left:161.87px;top:8.5px;width:1px;height:3px;background:#333"></div><div class="a" style="left:166.90px;top:2.5px;width:1px;height:9px;background:#2a2a2a"></div><div class="a" style="left:168.90px;top:2.5px;font-size:6.8px;line-height:7px;color:#555;white-space:nowrap;letter-spacing:-.2px">0</div><div class="a" style="left:171.93px;top:8.5px;width:1px;height:3px;background:#333"></div><div class="a" style="left:176.95px;top:7px;width:1px;height:4.5px;background:#333"></div><div class="a" style="left:181.98px;top:8.5px;width:1px;height:3px;background:#333"></div><div class="a" style="left:187.01px;top:7px;width:1px;height:4.5px;background:#333"></div><div class="a" style="left:192.03px;top:8.5px;width:1px;height:3px;background:#333"></div><div class="a" style="left:197.06px;top:7px;width:1px;height:4.5px;background:#333"></div><div class="a" style="left:202.09px;top:8.5px;width:1px;height:3px;background:#333"></div><div class="a" style="left:207.12px;top:7px;width:1px;height:4.5px;background:#333"></div><div class="a" style="left:212.14px;top:8.5px;width:1px;height:3px;background:#333"></div><div class="a" style="left:217.17px;top:2.5px;width:1px;height:9px;background:#2a2a2a"></div><div class="a" style="left:219.17px;top:2.5px;font-size:6.8px;line-height:7px;color:#555;white-space:nowrap;letter-spacing:-.2px">25</div><div class="a" style="left:222.20px;top:8.5px;width:1px;height:3px;background:#333"></div><div class="a" style="left:227.22px;top:7px;width:1px;height:4.5px;background:#333"></div><div class="a" style="left:232.25px;top:8.5px;width:1px;height:3px;background:#333"></div><div class="a" style="left:237.28px;top:7px;width:1px;height:4.5px;background:#333"></div><div class="a" style="left:242.31px;top:8.5px;width:1px;height:3px;background:#333"></div><div class="a" style="left:247.33px;top:7px;width:1px;height:4.5px;background:#333"></div><div class="a" style="left:252.36px;top:8.5px;width:1px;height:3px;background:#333"></div><div class="a" style="left:257.39px;top:7px;width:1px;height:4.5px;background:#333"></div><div class="a" style="left:262.41px;top:8.5px;width:1px;height:3px;background:#333"></div><div class="a" style="left:267.44px;top:2.5px;width:1px;height:9px;background:#2a2a2a"></div><div class="a" style="left:269.44px;top:2.5px;font-size:6.8px;line-height:7px;color:#555;white-space:nowrap;letter-spacing:-.2px">50</div><div class="a" style="left:272.47px;top:8.5px;width:1px;height:3px;background:#333"></div><div class="a" style="left:277.49px;top:7px;width:1px;height:4.5px;background:#333"></div><div class="a" style="left:282.52px;top:8.5px;width:1px;height:3px;background:#333"></div><div class="a" style="left:287.55px;top:7px;width:1px;height:4.5px;background:#333"></div><div class="a" style="left:292.57px;top:8.5px;width:1px;height:3px;background:#333"></div><div class="a" style="left:297.60px;top:7px;width:1px;height:4.5px;background:#333"></div><div class="a" style="left:302.63px;top:8.5px;width:1px;height:3px;background:#333"></div><div class="a" style="left:307.66px;top:7px;width:1px;height:4.5px;background:#333"></div><div class="a" style="left:312.68px;top:8.5px;width:1px;height:3px;background:#333"></div><div class="a" style="left:317.71px;top:2.5px;width:1px;height:9px;background:#2a2a2a"></div><div class="a" style="left:319.71px;top:2.5px;font-size:6.8px;line-height:7px;color:#555;white-space:nowrap;letter-spacing:-.2px">75</div><div class="a" style="left:322.74px;top:8.5px;width:1px;height:3px;background:#333"></div><div class="a" style="left:327.76px;top:7px;width:1px;height:4.5px;background:#333"></div><div class="a" style="left:332.79px;top:8.5px;width:1px;height:3px;background:#333"></div><div class="a" style="left:337.82px;top:7px;width:1px;height:4.5px;background:#333"></div><div class="a" style="left:342.85px;top:8.5px;width:1px;height:3px;background:#333"></div><div class="a" style="left:347.87px;top:7px;width:1px;height:4.5px;background:#333"></div><div class="a" style="left:352.90px;top:8.5px;width:1px;height:3px;background:#333"></div><div class="a" style="left:357.93px;top:7px;width:1px;height:4.5px;background:#333"></div><div class="a" style="left:362.95px;top:8.5px;width:1px;height:3px;background:#333"></div><div class="a" style="left:367.98px;top:2.5px;width:1px;height:9px;background:#2a2a2a"></div><div class="a" style="left:369.98px;top:2.5px;font-size:6.8px;line-height:7px;color:#555;white-space:nowrap;letter-spacing:-.2px">100</div><div class="a" style="left:373.01px;top:8.5px;width:1px;height:3px;background:#333"></div><div class="a" style="left:378.03px;top:7px;width:1px;height:4.5px;background:#333"></div><div class="a" style="left:383.06px;top:8.5px;width:1px;height:3px;background:#333"></div><div class="a" style="left:388.09px;top:7px;width:1px;height:4.5px;background:#333"></div><div class="a" style="left:393.12px;top:8.5px;width:1px;height:3px;background:#333"></div><div class="a" style="left:398.14px;top:7px;width:1px;height:4.5px;background:#333"></div><div class="a" style="left:403.17px;top:8.5px;width:1px;height:3px;background:#333"></div><div class="a" style="left:408.20px;top:7px;width:1px;height:4.5px;background:#333"></div><div class="a" style="left:413.22px;top:8.5px;width:1px;height:3px;background:#333"></div><div class="a" style="left:418.25px;top:2.5px;width:1px;height:9px;background:#2a2a2a"></div><div class="a" style="left:420.25px;top:2.5px;font-size:6.8px;line-height:7px;color:#555;white-space:nowrap;letter-spacing:-.2px">125</div><div class="a" style="left:423.28px;top:8.5px;width:1px;height:3px;background:#333"></div><div class="a" style="left:428.30px;top:7px;width:1px;height:4.5px;background:#333"></div><div class="a" style="left:433.33px;top:8.5px;width:1px;height:3px;background:#333"></div><div class="a" style="left:438.36px;top:7px;width:1px;height:4.5px;background:#333"></div><div class="a" style="left:443.38px;top:8.5px;width:1px;height:3px;background:#333"></div><div class="a" style="left:448.41px;top:7px;width:1px;height:4.5px;background:#333"></div><div class="a" style="left:453.44px;top:8.5px;width:1px;height:3px;background:#333"></div><div class="a" style="left:458.47px;top:7px;width:1px;height:4.5px;background:#333"></div><div class="a" style="left:463.49px;top:8.5px;width:1px;height:3px;background:#333"></div><div class="a" style="left:468.52px;top:2.5px;width:1px;height:9px;background:#2a2a2a"></div><div class="a" style="left:470.52px;top:2.5px;font-size:6.8px;line-height:7px;color:#555;white-space:nowrap;letter-spacing:-.2px">150</div><div class="a" style="left:473.55px;top:8.5px;width:1px;height:3px;background:#333"></div><div class="a" style="left:478.57px;top:7px;width:1px;height:4.5px;background:#333"></div><div class="a" style="left:483.60px;top:8.5px;width:1px;height:3px;background:#333"></div><div class="a" style="left:488.63px;top:7px;width:1px;height:4.5px;background:#333"></div><div class="a" style="left:493.65px;top:8.5px;width:1px;height:3px;background:#333"></div><div class="a" style="left:498.68px;top:7px;width:1px;height:4.5px;background:#333"></div><div class="a" style="left:503.71px;top:8.5px;width:1px;height:3px;background:#333"></div><div class="a" style="left:508.74px;top:7px;width:1px;height:4.5px;background:#333"></div><div class="a" style="left:513.76px;top:8.5px;width:1px;height:3px;background:#333"></div><div class="a" style="left:518.79px;top:2.5px;width:1px;height:9px;background:#2a2a2a"></div><div class="a" style="left:520.79px;top:2.5px;font-size:6.8px;line-height:7px;color:#555;white-space:nowrap;letter-spacing:-.2px">175</div><div class="a" style="left:523.82px;top:8.5px;width:1px;height:3px;background:#333"></div><div class="a" style="left:528.84px;top:7px;width:1px;height:4.5px;background:#333"></div><div class="a" style="left:533.87px;top:8.5px;width:1px;height:3px;background:#333"></div><div class="a" style="left:538.90px;top:7px;width:1px;height:4.5px;background:#333"></div><div class="a" style="left:543.93px;top:8.5px;width:1px;height:3px;background:#333"></div><div class="a" style="left:548.95px;top:7px;width:1px;height:4.5px;background:#333"></div><div class="a" style="left:553.98px;top:8.5px;width:1px;height:3px;background:#333"></div><div class="a" style="left:559.01px;top:7px;width:1px;height:4.5px;background:#333"></div><div class="a" style="left:564.03px;top:8.5px;width:1px;height:3px;background:#333"></div><div class="a" style="left:569.06px;top:2.5px;width:1px;height:9px;background:#2a2a2a"></div><div class="a" style="left:571.06px;top:2.5px;font-size:6.8px;line-height:7px;color:#555;white-space:nowrap;letter-spacing:-.2px">200</div><div class="a" style="left:574.09px;top:8.5px;width:1px;height:3px;background:#333"></div><div class="a" style="left:579.11px;top:7px;width:1px;height:4.5px;background:#333"></div><div class="a" style="left:584.14px;top:8.5px;width:1px;height:3px;background:#333"></div><div class="a" style="left:589.17px;top:7px;width:1px;height:4.5px;background:#333"></div><div class="a" style="left:594.20px;top:8.5px;width:1px;height:3px;background:#333"></div><div class="a" style="left:599.22px;top:7px;width:1px;height:4.5px;background:#333"></div><div class="a" style="left:604.25px;top:8.5px;width:1px;height:3px;background:#333"></div><div class="a" style="left:609.28px;top:7px;width:1px;height:4.5px;background:#333"></div><div class="a" style="left:614.30px;top:8.5px;width:1px;height:3px;background:#333"></div><div class="a" style="left:619.33px;top:2.5px;width:1px;height:9px;background:#2a2a2a"></div><div class="a" style="left:621.33px;top:2.5px;font-size:6.8px;line-height:7px;color:#555;white-space:nowrap;letter-spacing:-.2px">225</div><div class="a" style="left:624.36px;top:8.5px;width:1px;height:3px;background:#333"></div><div class="a" style="left:629.38px;top:7px;width:1px;height:4.5px;background:#333"></div><div class="a" style="left:634.41px;top:8.5px;width:1px;height:3px;background:#333"></div><div class="a" style="left:639.44px;top:7px;width:1px;height:4.5px;background:#333"></div><div class="a" style="left:644.47px;top:8.5px;width:1px;height:3px;background:#333"></div><div class="a" style="left:649.49px;top:7px;width:1px;height:4.5px;background:#333"></div><div class="a" style="left:654.52px;top:8.5px;width:1px;height:3px;background:#333"></div><div class="a" style="left:659.55px;top:7px;width:1px;height:4.5px;background:#333"></div><div class="a" style="left:664.57px;top:8.5px;width:1px;height:3px;background:#333"></div><div class="a" style="left:669.60px;top:2.5px;width:1px;height:9px;background:#2a2a2a"></div><div class="a" style="left:671.60px;top:2.5px;font-size:6.8px;line-height:7px;color:#555;white-space:nowrap;letter-spacing:-.2px">250</div><div class="a" style="left:674.63px;top:8.5px;width:1px;height:3px;background:#333"></div><div class="a" style="left:679.65px;top:7px;width:1px;height:4.5px;background:#333"></div><div class="a" style="left:684.68px;top:8.5px;width:1px;height:3px;background:#333"></div><div class="a" style="left:689.71px;top:7px;width:1px;height:4.5px;background:#333"></div><div class="a" style="left:694.74px;top:8.5px;width:1px;height:3px;background:#333"></div><div class="a" style="left:699.76px;top:7px;width:1px;height:4.5px;background:#333"></div><div class="a" style="left:704.79px;top:8.5px;width:1px;height:3px;background:#333"></div><div class="a" style="left:709.82px;top:7px;width:1px;height:4.5px;background:#333"></div>
<div class="a" style="left:15px;top:11px;width:700px;height:1px;background:#2a2a2a"></div>
<svg style="left:268px;top:8px" width="6" height="4" viewBox="0 0 6 4"><path d="M0 0H6L3 3.5Z" fill="#000"/></svg>
<svg style="left:3px;top:2px" width="8" height="8" viewBox="0 0 8 8"><path d="M2 4V2.8a2 2 0 0 1 4 0V4" fill="none" stroke="#777" stroke-width=".9"/><rect x=".8" y="3.8" width="6.4" height="4" rx=".6" fill="#f0b030" stroke="#8a6a20" stroke-width=".6"/></svg>
</div>
<div id="vruler" class="a">
<div class="a" style="left:9px;top:0.77px;width:3px;height:1px;background:#333"></div><div class="a" style="left:3px;top:5.80px;width:9px;height:1px;background:#2a2a2a"></div><div class="a" style="left:3px;top:7.80px;font-size:6.2px;line-height:6px;color:#555;text-align:center;width:5px"><div style="height:6px">2</div><div style="height:6px">7</div><div style="height:6px">5</div></div><div class="a" style="left:9px;top:10.83px;width:3px;height:1px;background:#333"></div><div class="a" style="left:7.5px;top:15.85px;width:4.5px;height:1px;background:#333"></div><div class="a" style="left:9px;top:20.88px;width:3px;height:1px;background:#333"></div><div class="a" style="left:7.5px;top:25.91px;width:4.5px;height:1px;background:#333"></div><div class="a" style="left:9px;top:30.94px;width:3px;height:1px;background:#333"></div><div class="a" style="left:7.5px;top:35.96px;width:4.5px;height:1px;background:#333"></div><div class="a" style="left:9px;top:40.99px;width:3px;height:1px;background:#333"></div><div class="a" style="left:7.5px;top:46.02px;width:4.5px;height:1px;background:#333"></div><div class="a" style="left:9px;top:51.04px;width:3px;height:1px;background:#333"></div><div class="a" style="left:3px;top:56.07px;width:9px;height:1px;background:#2a2a2a"></div><div class="a" style="left:3px;top:58.07px;font-size:6.2px;line-height:6px;color:#555;text-align:center;width:5px"><div style="height:6px">2</div><div style="height:6px">5</div><div style="height:6px">0</div></div><div class="a" style="left:9px;top:61.10px;width:3px;height:1px;background:#333"></div><div class="a" style="left:7.5px;top:66.12px;width:4.5px;height:1px;background:#333"></div><div class="a" style="left:9px;top:71.15px;width:3px;height:1px;background:#333"></div><div class="a" style="left:7.5px;top:76.18px;width:4.5px;height:1px;background:#333"></div><div class="a" style="left:9px;top:81.20px;width:3px;height:1px;background:#333"></div><div class="a" style="left:7.5px;top:86.23px;width:4.5px;height:1px;background:#333"></div><div class="a" style="left:9px;top:91.26px;width:3px;height:1px;background:#333"></div><div class="a" style="left:7.5px;top:96.29px;width:4.5px;height:1px;background:#333"></div><div class="a" style="left:9px;top:101.31px;width:3px;height:1px;background:#333"></div><div class="a" style="left:3px;top:106.34px;width:9px;height:1px;background:#2a2a2a"></div><div class="a" style="left:3px;top:108.34px;font-size:6.2px;line-height:6px;color:#555;text-align:center;width:5px"><div style="height:6px">2</div><div style="height:6px">2</div><div style="height:6px">5</div></div><div class="a" style="left:9px;top:111.37px;width:3px;height:1px;background:#333"></div><div class="a" style="left:7.5px;top:116.39px;width:4.5px;height:1px;background:#333"></div><div class="a" style="left:9px;top:121.42px;width:3px;height:1px;background:#333"></div><div class="a" style="left:7.5px;top:126.45px;width:4.5px;height:1px;background:#333"></div><div class="a" style="left:9px;top:131.47px;width:3px;height:1px;background:#333"></div><div class="a" style="left:7.5px;top:136.50px;width:4.5px;height:1px;background:#333"></div><div class="a" style="left:9px;top:141.53px;width:3px;height:1px;background:#333"></div><div class="a" style="left:7.5px;top:146.56px;width:4.5px;height:1px;background:#333"></div><div class="a" style="left:9px;top:151.58px;width:3px;height:1px;background:#333"></div><div class="a" style="left:3px;top:156.61px;width:9px;height:1px;background:#2a2a2a"></div><div class="a" style="left:3px;top:158.61px;font-size:6.2px;line-height:6px;color:#555;text-align:center;width:5px"><div style="height:6px">2</div><div style="height:6px">0</div><div style="height:6px">0</div></div><div class="a" style="left:9px;top:161.64px;width:3px;height:1px;background:#333"></div><div class="a" style="left:7.5px;top:166.66px;width:4.5px;height:1px;background:#333"></div><div class="a" style="left:9px;top:171.69px;width:3px;height:1px;background:#333"></div><div class="a" style="left:7.5px;top:176.72px;width:4.5px;height:1px;background:#333"></div><div class="a" style="left:9px;top:181.75px;width:3px;height:1px;background:#333"></div><div class="a" style="left:7.5px;top:186.77px;width:4.5px;height:1px;background:#333"></div><div class="a" style="left:9px;top:191.80px;width:3px;height:1px;background:#333"></div><div class="a" style="left:7.5px;top:196.83px;width:4.5px;height:1px;background:#333"></div><div class="a" style="left:9px;top:201.85px;width:3px;height:1px;background:#333"></div><div class="a" style="left:3px;top:206.88px;width:9px;height:1px;background:#2a2a2a"></div><div class="a" style="left:3px;top:208.88px;font-size:6.2px;line-height:6px;color:#555;text-align:center;width:5px"><div style="height:6px">1</div><div style="height:6px">7</div><div style="height:6px">5</div></div><div class="a" style="left:9px;top:211.91px;width:3px;height:1px;background:#333"></div><div class="a" style="left:7.5px;top:216.93px;width:4.5px;height:1px;background:#333"></div><div class="a" style="left:9px;top:221.96px;width:3px;height:1px;background:#333"></div><div class="a" style="left:7.5px;top:226.99px;width:4.5px;height:1px;background:#333"></div><div class="a" style="left:9px;top:232.01px;width:3px;height:1px;background:#333"></div><div class="a" style="left:7.5px;top:237.04px;width:4.5px;height:1px;background:#333"></div><div class="a" style="left:9px;top:242.07px;width:3px;height:1px;background:#333"></div><div class="a" style="left:7.5px;top:247.10px;width:4.5px;height:1px;background:#333"></div><div class="a" style="left:9px;top:252.12px;width:3px;height:1px;background:#333"></div><div class="a" style="left:3px;top:257.15px;width:9px;height:1px;background:#2a2a2a"></div><div class="a" style="left:3px;top:259.15px;font-size:6.2px;line-height:6px;color:#555;text-align:center;width:5px"><div style="height:6px">1</div><div style="height:6px">5</div><div style="height:6px">0</div></div><div class="a" style="left:9px;top:262.18px;width:3px;height:1px;background:#333"></div><div class="a" style="left:7.5px;top:267.20px;width:4.5px;height:1px;background:#333"></div><div class="a" style="left:9px;top:272.23px;width:3px;height:1px;background:#333"></div><div class="a" style="left:7.5px;top:277.26px;width:4.5px;height:1px;background:#333"></div><div class="a" style="left:9px;top:282.29px;width:3px;height:1px;background:#333"></div><div class="a" style="left:7.5px;top:287.31px;width:4.5px;height:1px;background:#333"></div><div class="a" style="left:9px;top:292.34px;width:3px;height:1px;background:#333"></div><div class="a" style="left:7.5px;top:297.37px;width:4.5px;height:1px;background:#333"></div><div class="a" style="left:9px;top:302.39px;width:3px;height:1px;background:#333"></div><div class="a" style="left:3px;top:307.42px;width:9px;height:1px;background:#2a2a2a"></div><div class="a" style="left:3px;top:309.42px;font-size:6.2px;line-height:6px;color:#555;text-align:center;width:5px"><div style="height:6px">1</div><div style="height:6px">2</div><div style="height:6px">5</div></div><div class="a" style="left:9px;top:312.45px;width:3px;height:1px;background:#333"></div><div class="a" style="left:7.5px;top:317.47px;width:4.5px;height:1px;background:#333"></div><div class="a" style="left:9px;top:322.50px;width:3px;height:1px;background:#333"></div><div class="a" style="left:7.5px;top:327.53px;width:4.5px;height:1px;background:#333"></div><div class="a" style="left:9px;top:332.56px;width:3px;height:1px;background:#333"></div><div class="a" style="left:7.5px;top:337.58px;width:4.5px;height:1px;background:#333"></div><div class="a" style="left:9px;top:342.61px;width:3px;height:1px;background:#333"></div><div class="a" style="left:7.5px;top:347.64px;width:4.5px;height:1px;background:#333"></div><div class="a" style="left:9px;top:352.66px;width:3px;height:1px;background:#333"></div><div class="a" style="left:3px;top:357.69px;width:9px;height:1px;background:#2a2a2a"></div><div class="a" style="left:3px;top:359.69px;font-size:6.2px;line-height:6px;color:#555;text-align:center;width:5px"><div style="height:6px">1</div><div style="height:6px">0</div><div style="height:6px">0</div></div><div class="a" style="left:9px;top:362.72px;width:3px;height:1px;background:#333"></div><div class="a" style="left:7.5px;top:367.74px;width:4.5px;height:1px;background:#333"></div><div class="a" style="left:9px;top:372.77px;width:3px;height:1px;background:#333"></div><div class="a" style="left:7.5px;top:377.80px;width:4.5px;height:1px;background:#333"></div><div class="a" style="left:9px;top:382.83px;width:3px;height:1px;background:#333"></div><div class="a" style="left:7.5px;top:387.85px;width:4.5px;height:1px;background:#333"></div><div class="a" style="left:9px;top:392.88px;width:3px;height:1px;background:#333"></div><div class="a" style="left:7.5px;top:397.91px;width:4.5px;height:1px;background:#333"></div>
<div class="a" style="left:12px;top:1px;width:1px;height:398px;background:#555"></div>
<svg style="left:8px;top:133px" width="4" height="6" viewBox="0 0 4 6"><path d="M0 0V6L3.7 3Z" fill="#000"/></svg>
</div>
<div id="canvas" class="a">
<div class="a" style="left:154px;top:0;width:1px;height:402px;background:#555"></div>
<div class="a" style="left:576px;top:0;width:2px;height:402px;background:#555"></div>
<div class="a" style="left:274.5px;top:144px;width:182px;height:182px;border-radius:50%;background:#dd0000"></div>
<div class="t b" id="inw" style="left:226px;top:94px;font-size:25.4px;line-height:28px;color:#000;letter-spacing:-.1px;font-weight:normal;-webkit-text-stroke:1px #000;transform:scaleX(1.07);transform-origin:0 0">Inwepo Inwepo Inwepo</div>
<svg style="left:227px;top:99px" width="276" height="24" viewBox="0 0 276 24"><rect x=".5" y=".5" width="275" height="23" fill="none" stroke="#555" stroke-width="1" stroke-dasharray="3 3"/></svg>
<svg style="left:274px;top:144px" width="183" height="183" viewBox="0 0 183 183"><rect x=".5" y=".5" width="182" height="182" fill="none" stroke="#555" stroke-width="1" stroke-dasharray="3 3"/></svg>
<svg style="left:224px;top:115px" width="5" height="5" viewBox="0 0 5 5"><rect x=".5" y=".5" width="3.5" height="3.5" fill="#fff" stroke="#000" stroke-width=".9"/></svg>
<svg style="left:218px;top:90px" width="9" height="9" viewBox="0 0 9 9"><path d="M0 0H5.5L0 5.5ZM9 9H3.5L9 3.5Z" fill="#000"/><path d="M2 2L7 7" stroke="#000" stroke-width="4.6"/></svg>
<svg style="left:502px;top:90px" width="9" height="9" viewBox="0 0 9 9"><path d="M9 0H3.5L9 5.5ZM0 9H5.5L0 3.5Z" fill="#000"/><path d="M7 2L2 7" stroke="#000" stroke-width="4.6"/></svg>
<svg style="left:218px;top:327px" width="9" height="9" viewBox="0 0 9 9"><path d="M9 0H3.5L9 5.5ZM0 9H5.5L0 3.5Z" fill="#000"/><path d="M7 2L2 7" stroke="#000" stroke-width="4.6"/></svg>
<svg style="left:502px;top:327px" width="9" height="9" viewBox="0 0 9 9"><path d="M0 0H5.5L0 5.5ZM9 9H3.5L9 3.5Z" fill="#000"/><path d="M2 2L7 7" stroke="#000" stroke-width="4.6"/></svg>
<svg style="left:361.8px;top:90px" width="7" height="9" viewBox="0 0 7 9"><path d="M3.1 0L6.3 3.2H0ZM3.1 9L6.3 5.8H0Z" fill="#000"/><rect x="1.3" y="2.5" width="3.6" height="4" fill="#000"/></svg>
<svg style="left:361.8px;top:327px" width="7" height="9" viewBox="0 0 7 9"><path d="M3.1 0L6.3 3.2H0ZM3.1 9L6.3 5.8H0Z" fill="#000"/><rect x="1.3" y="2.5" width="3.6" height="4" fill="#000"/></svg>
<svg style="left:218px;top:209px" width="9" height="7" viewBox="0 0 9 7"><path d="M0 3.1L3.2 6.3V0ZM9 3.1L5.8 6.3V0Z" fill="#000"/><rect x="2.5" y="1.3" width="4" height="3.6" fill="#000"/></svg>
<svg style="left:502px;top:209px" width="9" height="7" viewBox="0 0 9 7"><path d="M0 3.1L3.2 6.3V0ZM9 3.1L5.8 6.3V0Z" fill="#000"/><rect x="2.5" y="1.3" width="4" height="3.6" fill="#000"/></svg>
</div>
<div id="hscroll" class="a">
<svg style="left:17px;top:4px" width="5" height="7" viewBox="0 0 5 7"><path d="M4 .5L1 3.5L4 6.5" fill="none" stroke="#333" stroke-width="1.1"/></svg>
<div class="a" style="left:183px;top:1px;width:348px;height:11px;background:#cdcdcd"></div>
<svg style="left:707px;top:4px" width="5" height="7" viewBox="0 0 5 7"><path d="M1 .5L4 3.5L1 6.5" fill="none" stroke="#333" stroke-width="1.1"/></svg>
<svg style="left:717px;top:3px" width="7" height="7" viewBox="0 0 7 7"><path d="M1 0L6.5 3.5L1 7Z" fill="#7a9abe"/><path d="M1 3.5L6.5 3.5L1 7Z" fill="#5aa060"/><path d="M1 0L3 1.3V4.5L1 7Z" fill="#d05050"/></svg>
</div>
<div id="vscroll" class="a">
<svg style="left:3px;top:2px" width="8" height="8" viewBox="0 0 8 8"><circle cx="3.2" cy="3.2" r="2.5" fill="none" stroke="#999" stroke-width="1"/><path d="M5 5L7.5 7.5" stroke="#999" stroke-width="1.3"/></svg>
<svg style="left:3px;top:16px" width="7" height="5" viewBox="0 0 7 5"><path d="M.5 4.5L3.5 1L6.5 4.5" fill="none" stroke="#333" stroke-width="1.1"/></svg>
<div class="a" style="left:1px;top:161px;width:11px;height:80px;background:#cdcdcd"></div>
<svg style="left:3px;top:406px" width="7" height="5" viewBox="0 0 7 5"><path d="M.5 .5L3.5 4L6.5 .5" fill="none" stroke="#333" stroke-width="1.1"/></svg>
</div>
<div id="dock" class="a">
<div class="a" style="left:1px;top:0;width:1px;height:426px;background:#1a1a1a"></div>
<div class="a" style="left:1px;top:0;width:243px;height:1px;background:#1a1a1a"></div>
<div class="a" style="left:2px;top:1px;width:242px;height:1px;background:#fafafa"></div>
<div class="a" style="left:2px;top:17px;width:240px;height:1px;background:#d9d9d9"></div>
<div class="a" style="left:2px;top:18px;width:240px;height:1px;background:#fbfbfb"></div>
<svg style="left:2px;top:3px" width="11" height="11" viewBox="0 0 11 11"><rect x=".3" y="0" width="1" height="11" fill="#e06060"/><rect x="1.5" y="1" width="3.5" height="2.5" fill="#b8cfe0" stroke="#555" stroke-width=".5"/><rect x="1.5" y="4.5" width="8.5" height="2.5" fill="#b8cfe0" stroke="#555" stroke-width=".5"/><rect x="1.5" y="8" width="6" height="2.5" fill="#b8cfe0" stroke="#555" stroke-width=".5"/></svg>
<div class="t" style="left:13px;top:4px;font-size:9.05px;color:#222">Align and Distribute (Shift+Ctrl+A)</div>
<div class="a" style="left:214px;top:4px;width:9px;height:9px;border:1px solid #9a9a9a;border-radius:1.5px;background:#f2f2f2"></div>
<svg style="left:216.5px;top:6px" width="5" height="5" viewBox="0 0 5 5"><path d="M4.5 .5V4.5L.8 2.5Z" fill="#555"/></svg>
<div class="a" style="left:230.5px;top:4px;width:9px;height:9px;border:1px solid #9a9a9a;border-radius:1.5px;background:#f2f2f2"></div>
<svg style="left:232.5px;top:6px" width="5" height="5" viewBox="0 0 5 5"><path d="M.5 .5L4.5 4.5M4.5 .5L.5 4.5" stroke="#555" stroke-width="1.2"/></svg>
<div class="t" style="left:9.5px;top:21.5px;font-weight:bold;font-size:8.4px">Align</div>
<div class="t" style="left:104px;top:38.5px;color:#222">Relative to:</div>
<div class="a" style="left:149px;top:35.5px;width:89px;height:17.5px;background:#fff;border:1px solid #adadad"></div>
<div class="a" style="left:223px;top:35.5px;width:15px;height:17.5px;background:#e1e1e1;border:1px solid #adadad"></div>
<svg style="left:227px;top:42px" width="7" height="4" viewBox="0 0 7 4"><path d="M.5 .5L3.5 3.5L6.5 .5" fill="none" stroke="#555" stroke-width=".9"/></svg>
<div class="t" style="left:153px;top:39px;color:#111;font-size:9px">Page</div>
<div class="t" style="left:124.5px;top:57.5px;color:#222"><u>T</u>reat selection as group:</div>
<div class="a" style="left:225px;top:57px;width:10px;height:10px;background:#fff;border:1px solid #333"></div>
<svg style="left:89.0px;top:75px" width="18" height="18" viewBox="0 0 18 18"><rect x="0.5" y="4.5" width="12" height="4.5" rx=".6" fill="#c6daec" stroke="#2a2a2a" stroke-width=".9"/><rect x="7" y="8" width="5.5" height="4" rx=".6" fill="#c6daec" stroke="#2a2a2a" stroke-width=".9"/><rect x="3.5" y="12.5" width="9" height="4.5" rx=".6" fill="#c6daec" stroke="#2a2a2a" stroke-width=".9"/><path d="M12.8 0L12.8 18" stroke="#e02828" stroke-width="1"/><rect x="13" y=".5" width="4.5" height="4" fill="#f2c418" stroke="#444" stroke-width=".6"/></svg>
<svg style="left:114.5px;top:75px" width="18" height="18" viewBox="0 0 18 18"><path d="M0.8 0L0.8 18" stroke="#e02828" stroke-width="1"/><rect x="1.5" y="1" width="15" height="4.5" rx=".6" fill="#c6daec" stroke="#2a2a2a" stroke-width=".9"/><rect x="1.5" y="2.5" width="4" height="4" rx=".6" fill="#c6daec" stroke="#2a2a2a" stroke-width=".9"/><rect x="1.5" y="8" width="9" height="4" rx=".6" fill="#c6daec" stroke="#2a2a2a" stroke-width=".9"/><path d="M1.5 15.5H10" stroke="#222" stroke-width=".8"/><path d="M1.5 15.5L3.7 14.0V17.0Z" fill="#111"/></svg>
<svg style="left:140.0px;top:75px" width="18" height="18" viewBox="0 0 18 18"><rect x="1.5" y="1" width="15" height="4.5" rx=".6" fill="#c6daec" stroke="#2a2a2a" stroke-width=".9"/><rect x="6" y="5" width="6" height="3.5" rx=".6" fill="#c6daec" stroke="#2a2a2a" stroke-width=".9"/><rect x="4.5" y="9" width="9" height="4" rx=".6" fill="#c6daec" stroke="#2a2a2a" stroke-width=".9"/><path d="M9 0L9 18" stroke="#e02828" stroke-width="1"/><path d="M1 15.5H8" stroke="#222" stroke-width=".8"/><path d="M8 15.5L5.8 14.0V17.0Z" fill="#111"/><path d="M10 15.5H17" stroke="#222" stroke-width=".8"/><path d="M10 15.5L12.2 14.0V17.0Z" fill="#111"/></svg>
<svg style="left:165.5px;top:75px" width="18" height="18" viewBox="0 0 18 18"><rect x="0.5" y="1" width="15" height="4.5" rx=".6" fill="#c6daec" stroke="#2a2a2a" stroke-width=".9"/><rect x="10" y="4" width="5.5" height="4" rx=".6" fill="#c6daec" stroke="#2a2a2a" stroke-width=".9"/><rect x="6" y="9" width="9.5" height="4" rx=".6" fill="#c6daec" stroke="#2a2a2a" stroke-width=".9"/><path d="M16.2 0L16.2 18" stroke="#e02828" stroke-width="1"/><path d="M6 15.5H15.5" stroke="#222" stroke-width=".8"/><path d="M15.5 15.5L13.3 14.0V17.0Z" fill="#111"/></svg>
<svg style="left:191.0px;top:75px" width="18" height="18" viewBox="0 0 18 18"><rect x=".5" y=".5" width="4.5" height="4" fill="#f2c418" stroke="#444" stroke-width=".6"/><rect x="5" y="4.5" width="12" height="4.5" rx=".6" fill="#c6daec" stroke="#2a2a2a" stroke-width=".9"/><rect x="5" y="8" width="5.5" height="4" rx=".6" fill="#c6daec" stroke="#2a2a2a" stroke-width=".9"/><rect x="5" y="12.5" width="9" height="4.5" rx=".6" fill="#c6daec" stroke="#2a2a2a" stroke-width=".9"/><path d="M5 0L5 18" stroke="#e02828" stroke-width="1"/></svg>
<svg style="left:216.5px;top:75px" width="18" height="18" viewBox="0 0 18 18"><path d="M3 0L3 17" stroke="#e02828" stroke-width="1"/><text x="7" y="7.5" style="font-family:'Liberation Serif';font-size:10.5px;font-weight:bold;" fill="#2a3a5a">a</text><text x="1.5" y="15.5" style="font-family:'Liberation Serif';font-size:15px;font-weight:bold;font-style:italic;" fill="#111">y</text></svg>
<svg style="left:89.0px;top:100.5px" width="18" height="18" viewBox="0 0 18 18"><rect x="0.5" y="4" width="4" height="9" rx=".6" fill="#c6daec" stroke="#2a2a2a" stroke-width=".9"/><rect x="4" y="8" width="4.5" height="5" rx=".6" fill="#c6daec" stroke="#2a2a2a" stroke-width=".9"/><rect x="8.5" y="0.5" width="4.5" height="12.5" rx=".6" fill="#c6daec" stroke="#2a2a2a" stroke-width=".9"/><path d="M0 13L18 13" stroke="#e02828" stroke-width="1"/><rect x="13" y="13" width="4.5" height="4.5" fill="#f2c418" stroke="#444" stroke-width=".6"/></svg>
<svg style="left:114.5px;top:100.5px" width="18" height="18" viewBox="0 0 18 18"><path d="M0 0.8L18 0.8" stroke="#e02828" stroke-width="1"/><rect x="5" y="1.5" width="4.5" height="9" rx=".6" fill="#c6daec" stroke="#2a2a2a" stroke-width=".9"/><rect x="10" y="1.5" width="4.5" height="4" rx=".6" fill="#c6daec" stroke="#2a2a2a" stroke-width=".9"/><rect x="11" y="1.5" width="4.5" height="15.5" rx=".6" fill="#c6daec" stroke="#2a2a2a" stroke-width=".9"/><path d="M2 2V12" stroke="#222" stroke-width=".8"/><path d="M2 2L0.5 4.2H3.5Z" fill="#111"/></svg>
<svg style="left:140.0px;top:100.5px" width="18" height="18" viewBox="0 0 18 18"><rect x="5" y="4" width="4" height="8" rx=".6" fill="#c6daec" stroke="#2a2a2a" stroke-width=".9"/><rect x="9.5" y="5" width="4" height="6" rx=".6" fill="#c6daec" stroke="#2a2a2a" stroke-width=".9"/><rect x="12" y="0.5" width="4.5" height="17" rx=".6" fill="#c6daec" stroke="#2a2a2a" stroke-width=".9"/><path d="M0 8.8L18 8.8" stroke="#e02828" stroke-width="1"/><path d="M1.8 0V7" stroke="#222" stroke-width=".8"/><path d="M1.8 7L0.30000000000000004 4.8H3.3Z" fill="#111"/><path d="M1.8 10.5V17" stroke="#222" stroke-width=".8"/><path d="M1.8 10.5L0.30000000000000004 12.7H3.3Z" fill="#111"/></svg>
<svg style="left:165.5px;top:100.5px" width="18" height="18" viewBox="0 0 18 18"><rect x="3.5" y="7" width="4.5" height="9.5" rx=".6" fill="#c6daec" stroke="#2a2a2a" stroke-width=".9"/><rect x="8" y="11" width="4.5" height="5.5" rx=".6" fill="#c6daec" stroke="#2a2a2a" stroke-width=".9"/><rect x="11.5" y="0.5" width="4.5" height="16" rx=".6" fill="#c6daec" stroke="#2a2a2a" stroke-width=".9"/><path d="M0 17L18 17" stroke="#e02828" stroke-width="1"/><path d="M1.5 5V16" stroke="#222" stroke-width=".8"/><path d="M1.5 16L0.0 13.8H3.0Z" fill="#111"/></svg>
<svg style="left:191.0px;top:100.5px" width="18" height="18" viewBox="0 0 18 18"><rect x="0.5" y="5" width="4" height="9" rx=".6" fill="#c6daec" stroke="#2a2a2a" stroke-width=".9"/><rect x="5" y="5" width="4.5" height="4.5" rx=".6" fill="#c6daec" stroke="#2a2a2a" stroke-width=".9"/><rect x="8.5" y="5" width="4.5" height="12.5" rx=".6" fill="#c6daec" stroke="#2a2a2a" stroke-width=".9"/><path d="M0 5L18 5" stroke="#e02828" stroke-width="1"/><rect x="13" y=".5" width="4.5" height="4.5" fill="#f2c418" stroke="#444" stroke-width=".6"/></svg>
<svg style="left:216.5px;top:100.5px" width="18" height="18" viewBox="0 0 18 18"><path d="M0 12.5L18 12.5" stroke="#e02828" stroke-width="1"/><text x="-0.5" y="13" style="font-family:'Liberation Serif';font-size:15px;font-weight:bold;font-style:italic;" fill="#111">y</text><text x="10" y="12" style="font-family:'Liberation Serif';font-size:10.5px;font-weight:bold;" fill="#2a3a5a">a</text></svg>
<div class="t" style="left:9.5px;top:130.5px;font-weight:bold;font-size:8.6px">Distribute</div>
<svg style="left:114.0px;top:147.5px" width="18" height="18" viewBox="0 0 18 18"><path d="M1 2H11" stroke="#222" stroke-width=".9" stroke-dasharray="1 .6"/><path d="M1 0L1 6" stroke="#e02828" stroke-width="1.1"/><path d="M6 0L6 6" stroke="#e02828" stroke-width="1.1"/><path d="M11 0L11 6" stroke="#e02828" stroke-width="1.1"/><rect x="0.8" y="5.5" width="3.5" height="12" rx=".6" fill="#c6daec" stroke="#2a2a2a" stroke-width=".9"/><rect x="6" y="7" width="2.5" height="7.5" rx=".6" fill="#c6daec" stroke="#2a2a2a" stroke-width=".9"/><rect x="11" y="6" width="3.5" height="6" rx=".6" fill="#c6daec" stroke="#2a2a2a" stroke-width=".9"/></svg>
<svg style="left:139.5px;top:147.5px" width="18" height="18" viewBox="0 0 18 18"><path d="M2.5 2H13" stroke="#222" stroke-width=".9" stroke-dasharray="1 .6"/><path d="M2.5 0L2.5 6" stroke="#e02828" stroke-width="1.1"/><path d="M8 0L8 6" stroke="#e02828" stroke-width="1.1"/><path d="M13 0L13 6" stroke="#e02828" stroke-width="1.1"/><rect x="1" y="5.5" width="3.5" height="6.5" rx=".6" fill="#c6daec" stroke="#2a2a2a" stroke-width=".9"/><rect x="6" y="5" width="4" height="13" rx=".6" fill="#c6daec" stroke="#2a2a2a" stroke-width=".9"/><rect x="11.5" y="7.5" width="3" height="9" rx=".6" fill="#c6daec" stroke="#2a2a2a" stroke-width=".9"/></svg>
<svg style="left:165.0px;top:147.5px" width="18" height="18" viewBox="0 0 18 18"><path d="M3 2H15" stroke="#222" stroke-width=".9" stroke-dasharray="1 .6"/><path d="M3 0L3 6" stroke="#e02828" stroke-width="1.1"/><path d="M9 0L9 6" stroke="#e02828" stroke-width="1.1"/><path d="M15 0L15 6" stroke="#e02828" stroke-width="1.1"/><rect x="1" y="5.5" width="3.5" height="12" rx=".6" fill="#c6daec" stroke="#2a2a2a" stroke-width=".9"/><rect x="8" y="7.5" width="3" height="7" rx=".6" fill="#c6daec" stroke="#2a2a2a" stroke-width=".9"/><rect x="13" y="6" width="3.5" height="6" rx=".6" fill="#c6daec" stroke="#2a2a2a" stroke-width=".9"/></svg>
<svg style="left:190.5px;top:147.5px" width="18" height="18" viewBox="0 0 18 18"><path d="M2 2H14" stroke="#222" stroke-width=".9" stroke-dasharray="1 .6"/><path d="M2 0L2 6" stroke="#e02828" stroke-width="1.1"/><path d="M8 0L8 6" stroke="#e02828" stroke-width="1.1"/><path d="M14 0L14 6" stroke="#e02828" stroke-width="1.1"/><rect x="1" y="5" width="2.8" height="11.5" rx=".6" fill="#c6daec" stroke="#2a2a2a" stroke-width=".9"/><rect x="7" y="6" width="2.8" height="6.5" rx=".6" fill="#c6daec" stroke="#2a2a2a" stroke-width=".9"/><rect x="13" y="5" width="2.8" height="12.5" rx=".6" fill="#c6daec" stroke="#2a2a2a" stroke-width=".9"/></svg>
<svg style="left:216.0px;top:147.5px" width="18" height="18" viewBox="0 0 18 18"><path d="M0.8 0L0.8 18" stroke="#e02828" stroke-width="1"/><path d="M13.5 0L13.5 18" stroke="#e02828" stroke-width="1"/><path d="M1 2H13.5" stroke="#222" stroke-width=".8"/><path d="M13.5 2L11.3 0.5V3.5Z" fill="#111"/><text x="1.5" y="13" style="font-family:'Liberation Serif';font-size:10.5px;font-weight:bold;" fill="#2a3a5a">a</text><text x="7.5" y="13.5" style="font-family:'Liberation Serif';font-size:14px;font-weight:bold;font-style:italic;" fill="#111">y</text></svg>
<svg style="left:114.0px;top:173px" width="18" height="18" viewBox="0 0 18 18"><path d="M1.5 1 V14.5" stroke="#222" stroke-width=".9"/><path d="M0 1L6 1" stroke="#e02828" stroke-width="1.1"/><path d="M0 7.5L6 7.5" stroke="#e02828" stroke-width="1.1"/><path d="M0 14.5L6 14.5" stroke="#e02828" stroke-width="1.1"/><rect x="6" y="0.5" width="6" height="4" rx=".6" fill="#c6daec" stroke="#2a2a2a" stroke-width=".9"/><rect x="6" y="6.5" width="8.5" height="2.5" rx=".6" fill="#c6daec" stroke="#2a2a2a" stroke-width=".9"/><rect x="5" y="14" width="12.5" height="3.5" rx=".6" fill="#c6daec" stroke="#2a2a2a" stroke-width=".9"/></svg>
<svg style="left:139.5px;top:173px" width="18" height="18" viewBox="0 0 18 18"><path d="M1.5 2.5 V14.5" stroke="#222" stroke-width=".9"/><path d="M0 2.5L6 2.5" stroke="#e02828" stroke-width="1.1"/><path d="M0 8.5L6 8.5" stroke="#e02828" stroke-width="1.1"/><path d="M0 14.5L6 14.5" stroke="#e02828" stroke-width="1.1"/><rect x="7" y="0.5" width="7.5" height="4" rx=".6" fill="#c6daec" stroke="#2a2a2a" stroke-width=".9"/><rect x="5" y="6" width="12" height="5" rx=".6" fill="#c6daec" stroke="#2a2a2a" stroke-width=".9"/><rect x="5.5" y="12.5" width="7" height="4.5" rx=".6" fill="#c6daec" stroke="#2a2a2a" stroke-width=".9"/></svg>
<svg style="left:165.0px;top:173px" width="18" height="18" viewBox="0 0 18 18"><path d="M1.5 4.5 V16.5" stroke="#222" stroke-width=".9"/><path d="M0 4.5L6 4.5" stroke="#e02828" stroke-width="1.1"/><path d="M0 10.5L6 10.5" stroke="#e02828" stroke-width="1.1"/><path d="M0 16.5L6 16.5" stroke="#e02828" stroke-width="1.1"/><rect x="7" y="0.5" width="6.5" height="4" rx=".6" fill="#c6daec" stroke="#2a2a2a" stroke-width=".9"/><rect x="7" y="8" width="7" height="3" rx=".6" fill="#c6daec" stroke="#2a2a2a" stroke-width=".9"/><rect x="5" y="13" width="12.5" height="4" rx=".6" fill="#c6daec" stroke="#2a2a2a" stroke-width=".9"/></svg>
<svg style="left:190.5px;top:173px" width="18" height="18" viewBox="0 0 18 18"><path d="M1.5 2 V15" stroke="#222" stroke-width=".9"/><path d="M0 2L6 2" stroke="#e02828" stroke-width="1.1"/><path d="M0 8.5L6 8.5" stroke="#e02828" stroke-width="1.1"/><path d="M0 15L6 15" stroke="#e02828" stroke-width="1.1"/><rect x="5" y="0.8" width="11" height="2.8" rx=".6" fill="#c6daec" stroke="#2a2a2a" stroke-width=".9"/><rect x="5" y="7.5" width="8" height="2.5" rx=".6" fill="#c6daec" stroke="#2a2a2a" stroke-width=".9"/><rect x="5" y="14" width="11" height="2.8" rx=".6" fill="#c6daec" stroke="#2a2a2a" stroke-width=".9"/></svg>
<svg style="left:216.0px;top:173px" width="18" height="18" viewBox="0 0 18 18"><path d="M0 7L18 7" stroke="#e02828" stroke-width="1"/><path d="M0 17L18 17" stroke="#e02828" stroke-width="1"/><path d="M2 7V17" stroke="#222" stroke-width=".8"/><path d="M2 17L0.5 14.8H3.5Z" fill="#111"/><path d="M2 7V17" stroke="#222" stroke-width=".8"/><path d="M2 7L0.5 9.2H3.5Z" fill="#111"/><text x="7" y="8.5" style="font-family:'Liberation Serif';font-size:13px;font-weight:bold;font-style:italic;" fill="#111">y</text><text x="9" y="16.5" style="font-family:'Liberation Serif';font-size:10.5px;font-weight:bold;" fill="#2a3a5a">a</text></svg>
<div class="t" style="left:9.5px;top:207.5px;font-weight:bold;font-size:8.6px">Rearrange</div>
<svg style="left:88.5px;top:225px" width="18" height="18" viewBox="0 0 18 18"><path d="M3 5L7 3L9.5 7.5L7 12L3 11.5L1 8Z" fill="none" stroke="#9cc0e6" stroke-width="1.3"/><path d="M9.5 7.5L13 7.5L16.5 3.5M13 7.5L16 12" fill="none" stroke="#9cc0e6" stroke-width="1.3"/></svg>
<svg style="left:114.0px;top:225px" width="18" height="18" viewBox="0 0 18 18"><rect x="0.5" y="0.5" width="7.5" height="7.5" fill="#c6daec" stroke="#333" stroke-width=".9"/><rect x="9" y="8" width="7.5" height="7.5" fill="#c6daec" stroke="#333" stroke-width=".9"/><path d="M8 4.5H12.5V8M3.5 8.5V12.5H9" fill="none" stroke="#222" stroke-width=".9"/><path d="M11.2 7L12.5 9L13.8 7Z" fill="#111"/></svg>
<svg style="left:139.5px;top:225px" width="18" height="18" viewBox="0 0 18 18"><rect x="0.5" y="0.5" width="7" height="7" fill="#c6daec" stroke="#333" stroke-width=".9"/><rect x="9.5" y="5" width="7" height="7" fill="#c6daec" stroke="#333" stroke-width=".9"/><path d="M7.5 3.5H12.5V5" fill="none" stroke="#222" stroke-width=".9"/><path d="M4 7.5V11" stroke="#222" stroke-width=".9"/><path d="M1 12h8M1 14h8M2 16h7" stroke="#c02020" stroke-width="1.1"/></svg>
<svg style="left:165.0px;top:225px" width="18" height="18" viewBox="0 0 18 18"><rect x="0.5" y="0.5" width="7" height="7" fill="#c6daec" stroke="#333" stroke-width=".9"/><rect x="9.5" y="5" width="7" height="7" fill="#c6daec" stroke="#333" stroke-width=".9"/><path d="M7.5 3.5H12.5V5" fill="none" stroke="#222" stroke-width=".9"/><circle cx="4.5" cy="12.5" r="3.5" fill="none" stroke="#e02020" stroke-width=".9" stroke-dasharray="1.2 .8"/></svg>
<svg style="left:190.5px;top:225px" width="18" height="18" viewBox="0 0 18 18"><rect x="1" y="2" width="4.5" height="3" fill="#f2c418" stroke="#886620" stroke-width=".5"/><rect x="8" y=".5" width="4.5" height="3" fill="#f2c418" stroke="#886620" stroke-width=".5"/><rect x="12.5" y="5" width="4.5" height="3" fill="#f2c418" stroke="#886620" stroke-width=".5"/><rect x="7" y="7" width="4.5" height="3" fill="#f2c418" stroke="#886620" stroke-width=".5"/><rect x="1" y="12" width="4.5" height="3" fill="#f2c418" stroke="#886620" stroke-width=".5"/><rect x="8" y="12" width="4.5" height="3" fill="#f2c418" stroke="#886620" stroke-width=".5"/></svg>
<svg style="left:216.0px;top:225px" width="18" height="18" viewBox="0 0 18 18"><path d="M6 8.5L15 3M6 8.5L15 13.5M15 3V13.5" stroke="#e03030" stroke-width=".8" fill="none"/><rect x=".5" y="5.5" width="5.5" height="5" fill="#f2c418" stroke="#333" stroke-width=".8"/><rect x="13.5" y="1" width="3.5" height="4.5" fill="#f2c418" stroke="#333" stroke-width=".8"/><rect x="13.5" y="12" width="3.5" height="4.5" fill="#f2c418" stroke="#333" stroke-width=".8"/></svg>
<div class="t" style="left:9.5px;top:259.5px;font-weight:bold;font-size:8.6px">Remove overlaps</div>
<div class="t" style="left:97px;top:281px;color:#222"><u>H</u>:</div>
<div class="a" style="left:108px;top:277px;width:37px;height:17px;background:#fff;border:1px solid #adadad"></div>
<div class="t" style="left:111px;top:281px;color:#222;font-size:8.6px">0.0</div>
<div class="a" style="left:145px;top:277px;width:8px;height:17px;background:#e6e6e6;border:1px solid #c4c4c4"></div>
<div class="a" style="left:145px;top:285px;width:8px;height:1px;background:#c4c4c4"></div>
<svg style="left:147px;top:279px" width="5" height="4" viewBox="0 0 5 4"><path d="M2.5 .5L5 3.5H0Z" fill="#111"/></svg>
<svg style="left:147px;top:288px" width="5" height="4" viewBox="0 0 5 4"><path d="M2.5 3.5L5 .5H0Z" fill="#111"/></svg>
<div class="t" style="left:156px;top:281px;color:#222"><u>V</u>:</div>
<div class="a" style="left:165.5px;top:277px;width:36px;height:17px;background:#fff;border:1px solid #adadad"></div>
<div class="t" style="left:168.5px;top:281px;color:#222;font-size:8.6px">0.0</div>
<div class="a" style="left:202px;top:277px;width:8px;height:17px;background:#e6e6e6;border:1px solid #c4c4c4"></div>
<div class="a" style="left:202px;top:285px;width:8px;height:1px;background:#c4c4c4"></div>
<svg style="left:204px;top:279px" width="5" height="4" viewBox="0 0 5 4"><path d="M2.5 .5L5 3.5H0Z" fill="#111"/></svg>
<svg style="left:204px;top:288px" width="5" height="4" viewBox="0 0 5 4"><path d="M2.5 3.5L5 .5H0Z" fill="#111"/></svg>
<svg style="left:216px;top:277px" width="18" height="18" viewBox="0 0 18 18"><rect x="0" y="0" width="18" height="18" fill="#b8cce0"/><path d="M2 0v18M6 0v18M11 0v18M15 0v18" stroke="#8a9aaa" stroke-width="1.3"/><path d="M2 8H6M11 5H15" stroke="#c8d8e8" stroke-width="2"/></svg>
<div class="a" style="left:4px;top:314.0px;width:239px;height:14.5px;background:#cce4f7;border:1px solid #3c7fb1"></div>
<svg style="left:6px;top:316.5px" width="10" height="10" viewBox="0 0 10 10"><rect x=".3" y="0" width="1" height="10" fill="#aaa"/><rect x="1.5" y="1" width="3.5" height="2.3" fill="#ccd" stroke="#666" stroke-width=".5"/><rect x="1.5" y="4" width="8" height="2.3" fill="#ccd" stroke="#666" stroke-width=".5"/><rect x="1.5" y="7" width="6" height="2.3" fill="#ccd" stroke="#666" stroke-width=".5"/></svg>
<div class="t" style="left:18px;top:317.0px;color:#222;font-size:8.75px">Align and Distribute (Shift+Ctrl+A)</div>
<svg style="left:229px;top:319.0px" width="7" height="5" viewBox="0 0 7 5"><path d="M3.5 .5L6.5 4H.5Z" fill="#111"/></svg>
<div class="a" style="left:4px;top:331.25px;width:239px;height:14.5px;background:#e1e1e1;border:1px solid #cfcfcf"></div>
<svg style="left:6px;top:333.75px" width="10" height="10" viewBox="0 0 10 10"><path d="M1.5 .5H6L8 2.5V9.5H1.5Z" fill="#fafafa" stroke="#444" stroke-width=".8"/><path d="M4 5.5H10M8.5 4L10 5.5L8.5 7" fill="none" stroke="#222" stroke-width=".8"/></svg>
<div class="t" style="left:18px;top:334.25px;color:#222;font-size:8.75px">Export PNG Image (Shift+Ctrl+E)</div>
<svg style="left:229px;top:336.25px" width="7" height="5" viewBox="0 0 7 5"><path d="M3.5 .5L6.5 4H.5Z" fill="#555"/></svg>
<div class="a" style="left:4px;top:348.5px;width:239px;height:14.5px;background:#e1e1e1;border:1px solid #cfcfcf"></div>
<svg style="left:6px;top:351.0px" width="10" height="10" viewBox="0 0 10 10"><path d="M.5 9.5L1.5 1.5L8 .5L10 3L2.5 9.5Z" fill="#333"/><path d="M8 .5L10 2L10 3.5L8.5 2.5Z" fill="#f0a020"/></svg>
<div class="t" style="left:18px;top:351.5px;color:#222;font-size:8.75px">Fill and Stroke (Shift+Ctrl+F)</div>
<svg style="left:229px;top:353.5px" width="7" height="5" viewBox="0 0 7 5"><path d="M3.5 .5L6.5 4H.5Z" fill="#555"/></svg>
<div class="a" style="left:4px;top:365.75px;width:239px;height:14.5px;background:#e1e1e1;border:1px solid #cfcfcf"></div>
<svg style="left:6px;top:368.25px" width="10" height="10" viewBox="0 0 10 10"><path d="M.5 2.5L2 .5H9.5V7L8 9.5H.5Z" fill="#ddd" stroke="#777" stroke-width=".6"/><path d="M.5 4.5H8M.5 6.5H8M.5 8.5H8" stroke="#666" stroke-width=".7"/></svg>
<div class="t" style="left:18px;top:368.75px;color:#222;font-size:8.75px">Layers (Shift+Ctrl+L)</div>
<svg style="left:229px;top:370.75px" width="7" height="5" viewBox="0 0 7 5"><path d="M3.5 .5L6.5 4H.5Z" fill="#555"/></svg>
</div>
<div id="snapbar" class="a">
<div class="a" style="left:3px;top:2px;width:19.5px;height:18.5px;background:#cce8ff;border:1px solid #99d1ff"></div>
<svg style="left:6px;top:5px" width="13" height="13" viewBox="0 0 13 13"><circle cx="2.5" cy="2.5" r="2" fill="#4060ff" stroke="#2030c0" stroke-width=".5"/><path d="M3.5 3.5L8 8" stroke="#111" stroke-width="1"/><path d="M9 9L6 8.5L8.5 6Z" fill="#111"/><path d="M10 7L12.5 9.5L10 12L7.5 9.5Z" fill="#fff" stroke="#40a040" stroke-width="1"/></svg>
<div class="a" style="left:6px;top:25px;width:13px;height:1px;background:#c8c8c8"></div>
<svg style="left:6px;top:34px" width="13" height="13" viewBox="0 0 13 13"><circle cx="2.5" cy="2.5" r="2" fill="#4060ff" stroke="#2030c0" stroke-width=".5"/><path d="M3.5 3.5L8 8" stroke="#111" stroke-width="1"/><path d="M9 9L6 8.5L8.5 6Z" fill="#111"/><path d="M10 7L12.5 9.5L10 12L7.5 9.5Z" fill="#fff" stroke="#40a040" stroke-width="1"/></svg>
<svg style="left:6px;top:52px" width="13" height="13" viewBox="0 0 13 13"><path d="M1 11.5H11.5V1" fill="none" stroke="#555" stroke-width=".8" stroke-dasharray="1 1"/></svg>
<svg style="left:6px;top:72px" width="13" height="13" viewBox="0 0 13 13"><path d="M1 11.5H11.5V1" fill="none" stroke="#555" stroke-width=".8" stroke-dasharray="1 1"/><path d="M11.5 7L13.5 9L11.5 11L9.5 9Z" fill="#999"/></svg>
<svg style="left:6px;top:91px" width="13" height="13" viewBox="0 0 13 13"><path d="M1 11.5H11.5V1" fill="none" stroke="#555" stroke-width=".8" stroke-dasharray="1 1"/><path d="M11.5 4L12.8 6L11.5 8L10.2 6Z" fill="#888"/></svg>
<svg style="left:6px;top:111px" width="13" height="13" viewBox="0 0 13 13"><path d="M1 11.5H11.5V1" fill="none" stroke="#555" stroke-width=".8" stroke-dasharray="1 1"/><circle cx="3" cy="3" r="1.3" fill="#999"/></svg>
<div class="a" style="left:6px;top:131px;width:13px;height:1px;background:#c8c8c8"></div>
<div class="a" style="left:3px;top:137px;width:19.5px;height:19px;background:#cce8ff;border:1px solid #99d1ff"></div>
<svg style="left:6px;top:140px" width="13" height="13" viewBox="0 0 13 13"><circle cx="2.5" cy="2.5" r="2" fill="#4060ff" stroke="#2030c0" stroke-width=".5"/><path d="M3.5 3.5L8 8" stroke="#111" stroke-width="1"/><path d="M9 9L6 8.5L8.5 6Z" fill="#111"/><path d="M10 7L12.5 9.5L10 12L7.5 9.5Z" fill="#fff" stroke="#40a040" stroke-width="1"/></svg>
<svg style="left:6px;top:160px" width="13" height="13" viewBox="0 0 13 13"><path d="M1.5 1.5C5 1 7 5 6 9L9.5 10.5" fill="none" stroke="#30a030" stroke-width="1.4"/></svg>
<svg style="left:6px;top:179px" width="13" height="13" viewBox="0 0 13 13"><path d="M1 11L12 2M1 8L12 6" stroke="#555" stroke-width=".9"/><circle cx="6.5" cy="7" r="1.6" fill="#30a030"/></svg>
<div class="a" style="left:3px;top:194.5px;width:19.5px;height:19.0px;background:#cce8ff;border:1px solid #99d1ff"></div>
<svg style="left:6px;top:197px" width="13" height="13" viewBox="0 0 13 13"><path d="M1.5 1.5C7 1.5 10 5 9 10" fill="none" stroke="#555" stroke-width="1"/><path d="M6.5 8.5L9 6L11.5 8.5L9 11Z" fill="#fff" stroke="#30a030" stroke-width="1"/></svg>
<svg style="left:6px;top:217px" width="13" height="13" viewBox="0 0 13 13"><path d="M1.5 1.5H5C8 3 9 6 8.5 10M5.5 11L11.5 7" fill="none" stroke="#555" stroke-width=".9"/><rect x="3.5" y="1" width="3" height="3" fill="#30a030"/></svg>
<svg style="left:6px;top:237px" width="13" height="13" viewBox="0 0 13 13"><path d="M1 12L12 1M3 12L10 1" stroke="#e03030" stroke-width=".9" stroke-dasharray="2 1"/><circle cx="6.5" cy="6.5" r="1.6" fill="#30a030"/></svg>
<div class="a" style="left:6px;top:257.5px;width:13px;height:1px;background:#c8c8c8"></div>
<div class="a" style="left:3px;top:262.5px;width:19.5px;height:19.0px;background:#cce8ff;border:1px solid #99d1ff"></div>
<svg style="left:6px;top:265px" width="13" height="13" viewBox="0 0 13 13"><circle cx="2.5" cy="2.5" r="2" fill="#4060ff" stroke="#2030c0" stroke-width=".5"/><path d="M3.5 3.5L8 8" stroke="#111" stroke-width="1"/><path d="M9 9L6 8.5L8.5 6Z" fill="#111"/><path d="M10 7L12.5 9.5L10 12L7.5 9.5Z" fill="#fff" stroke="#40a040" stroke-width="1"/></svg>
<svg style="left:6px;top:285px" width="13" height="13" viewBox="0 0 13 13"><path d="M1 11.5H11.5V1" fill="none" stroke="#555" stroke-width=".8"/><circle cx="5" cy="5" r="1.5" fill="#30a030"/></svg>
<svg style="left:6px;top:304px" width="13" height="13" viewBox="0 0 13 13"><path d="M1 11.5H11.5V1" fill="none" stroke="#555" stroke-width=".8" stroke-dasharray="1 1"/><path d="M2 6.5H7M4.5 4V9" stroke="#222" stroke-width="1"/></svg>
<svg style="left:6px;top:323px" width="13" height="13" viewBox="0 0 13 13"><path d="M.5 12.5L5 .5H8L12.5 12.5H9.8L8.8 9.6H4.2L3.2 12.5ZM4.9 7.5H8.1L6.5 2.8Z" fill="#111"/><path d="M1 12L3.5 10L6 12" stroke="#30a030" stroke-width=".9" fill="none"/></svg>
<div class="a" style="left:6px;top:344px;width:13px;height:1px;background:#c8c8c8"></div>
<svg style="left:6px;top:353px" width="13" height="13" viewBox="0 0 13 13"><rect x="2.5" y=".5" width="8.5" height="11" rx=".8" fill="#e8e8e8" stroke="#222" stroke-width="1"/></svg>
<div class="a" style="left:3px;top:369px;width:19.5px;height:18.5px;background:#cce8ff;border:1px solid #99d1ff"></div>
<svg style="left:6px;top:371px" width="13" height="13" viewBox="0 0 13 13"><path d="M1 1.5H12M1 4.5H12M1 7.5H12M1 10.5H12M1.5 1V11M4.5 1V11M7.5 1V11M10.5 1V11" stroke="#2020e0" stroke-width="1"/></svg>
<div class="a" style="left:3px;top:389px;width:19.5px;height:17.5px;background:#cce8ff;border:1px solid #99d1ff"></div>
<svg style="left:6px;top:391px" width="13" height="13" viewBox="0 0 13 13"><path d="M2 1V12M11 1V12M4 12L9 1" stroke="#2a4ae0" stroke-width="1.1"/></svg>
</div>
<div id="palette" class="a">
<div class="a" style="left:0;top:0;width:1016px;height:1px;background:#333"></div>
<div class="sw" style="left:11.5px;width:10.5px;background:#000000"></div><div class="sw" style="left:22.0px;width:10.5px;background:#696969"></div><div class="sw" style="left:32.5px;width:10.5px;background:#808080"></div><div class="sw" style="left:43.0px;width:10.5px;background:#a9a9a9"></div><div class="sw" style="left:53.5px;width:10.5px;background:#c0c0c0"></div><div class="sw" style="left:64.0px;width:10.5px;background:#d3d3d3"></div><div class="sw" style="left:74.5px;width:10.5px;background:#dcdcdc"></div><div class="sw" style="left:85.0px;width:10.5px;background:#f5f5f5"></div><div class="sw" style="left:95.5px;width:10.5px;background:#ffffff"></div><div class="sw" style="left:106.0px;width:10.5px;background:#bc8f8f"></div><div class="sw" style="left:116.5px;width:10.5px;background:#cd5c5c"></div><div class="sw" style="left:127.0px;width:10.5px;background:#a52a2a"></div><div class="sw" style="left:137.5px;width:10.5px;background:#b22222"></div><div class="sw" style="left:148.0px;width:10.5px;background:#f08080"></div><div class="sw" style="left:158.5px;width:10.5px;background:#800000"></div><div class="sw" style="left:169.0px;width:10.5px;background:#8b0000"></div><div class="sw" style="left:179.5px;width:10.5px;background:#ff0000"></div><div class="sw" style="left:190.0px;width:10.5px;background:#fffafa"></div><div class="sw" style="left:200.5px;width:10.5px;background:#ffe4e1"></div><div class="sw" style="left:211.0px;width:10.5px;background:#fa8072"></div><div class="sw" style="left:221.5px;width:10.5px;background:#ff6347"></div><div class="sw" style="left:232.0px;width:10.5px;background:#e9967a"></div><div class="sw" style="left:242.5px;width:10.5px;background:#ff7f50"></div><div class="sw" style="left:253.0px;width:10.5px;background:#ff4500"></div><div class="sw" style="left:263.5px;width:10.5px;background:#ffa07a"></div><div class="sw" style="left:274.0px;width:10.5px;background:#a0522d"></div><div class="sw" style="left:284.5px;width:10.5px;background:#fff5ee"></div><div class="sw" style="left:295.0px;width:10.5px;background:#d2691e"></div><div class="sw" style="left:305.5px;width:10.5px;background:#8b4513"></div><div class="sw" style="left:316.0px;width:10.5px;background:#f4a460"></div><div class="sw" style="left:326.5px;width:10.5px;background:#ffdab9"></div><div class="sw" style="left:337.0px;width:10.5px;background:#cd853f"></div><div class="sw" style="left:347.5px;width:10.5px;background:#faf0e6"></div><div class="sw" style="left:358.0px;width:10.5px;background:#ffe4c4"></div><div class="sw" style="left:368.5px;width:10.5px;background:#ff8c00"></div><div class="sw" style="left:379.0px;width:10.5px;background:#deb887"></div><div class="sw" style="left:389.5px;width:10.5px;background:#d2b48c"></div><div class="sw" style="left:400.0px;width:10.5px;background:#faebd7"></div><div class="sw" style="left:410.5px;width:10.5px;background:#ffdead"></div><div class="sw" style="left:421.0px;width:10.5px;background:#ffebcd"></div><div class="sw" style="left:431.5px;width:10.5px;background:#ffefd5"></div><div class="sw" style="left:442.0px;width:10.5px;background:#ffe4b5"></div><div class="sw" style="left:452.5px;width:10.5px;background:#ffa500"></div><div class="sw" style="left:463.0px;width:10.5px;background:#f5deb3"></div><div class="sw" style="left:473.5px;width:10.5px;background:#fdf5e6"></div><div class="sw" style="left:484.0px;width:10.5px;background:#fffaf0"></div><div class="sw" style="left:494.5px;width:10.5px;background:#b8860b"></div><div class="sw" style="left:505.0px;width:10.5px;background:#daa520"></div><div class="sw" style="left:515.5px;width:10.5px;background:#fff8dc"></div><div class="sw" style="left:526.0px;width:10.5px;background:#ffd700"></div><div class="sw" style="left:536.5px;width:10.5px;background:#f0e68c"></div><div class="sw" style="left:547.0px;width:10.5px;background:#fffacd"></div><div class="sw" style="left:557.5px;width:10.5px;background:#eee8aa"></div><div class="sw" style="left:568.0px;width:10.5px;background:#bdb76b"></div><div class="sw" style="left:578.5px;width:10.5px;background:#f5f5dc"></div><div class="sw" style="left:589.0px;width:10.5px;background:#fafad2"></div><div class="sw" style="left:599.5px;width:10.5px;background:#808000"></div><div class="sw" style="left:610.0px;width:10.5px;background:#ffff00"></div><div class="sw" style="left:620.5px;width:10.5px;background:#ffffe0"></div><div class="sw" style="left:631.0px;width:10.5px;background:#fffff0"></div><div class="sw" style="left:641.5px;width:10.5px;background:#6b8e23"></div><div class="sw" style="left:652.0px;width:10.5px;background:#9acd32"></div><div class="sw" style="left:662.5px;width:10.5px;background:#556b2f"></div><div class="sw" style="left:673.0px;width:10.5px;background:#adff2f"></div><div class="sw" style="left:683.5px;width:10.5px;background:#7fff00"></div><div class="sw" style="left:694.0px;width:10.5px;background:#7cfc00"></div><div class="sw" style="left:704.5px;width:10.5px;background:#8fbc8f"></div><div class="sw" style="left:715.0px;width:10.5px;background:#228b22"></div><div class="sw" style="left:725.5px;width:10.5px;background:#32cd32"></div><div class="sw" style="left:736.0px;width:10.5px;background:#90ee90"></div><div class="sw" style="left:746.5px;width:10.5px;background:#98fb98"></div><div class="sw" style="left:757.0px;width:10.5px;background:#006400"></div><div class="sw" style="left:767.5px;width:10.5px;background:#008000"></div><div class="sw" style="left:778.0px;width:10.5px;background:#00ff00"></div><div class="sw" style="left:788.5px;width:10.5px;background:#f0fff0"></div><div class="sw" style="left:799.0px;width:10.5px;background:#2e8b57"></div><div class="sw" style="left:809.5px;width:10.5px;background:#3cb371"></div><div class="sw" style="left:820.0px;width:10.5px;background:#00ff7f"></div><div class="sw" style="left:830.5px;width:10.5px;background:#f5fffa"></div><div class="sw" style="left:841.0px;width:10.5px;background:#00fa9a"></div><div class="sw" style="left:851.5px;width:10.5px;background:#66cdaa"></div><div class="sw" style="left:862.0px;width:10.5px;background:#7fffd4"></div><div class="sw" style="left:872.5px;width:10.5px;background:#40e0d0"></div><div class="sw" style="left:883.0px;width:10.5px;background:#20b2aa"></div><div class="sw" style="left:893.5px;width:10.5px;background:#48d1cc"></div><div class="sw" style="left:904.0px;width:10.5px;background:#2f4f4f"></div><div class="sw" style="left:914.5px;width:10.5px;background:#afeeee"></div><div class="sw" style="left:925.0px;width:10.5px;background:#008080"></div><div class="sw" style="left:935.5px;width:10.5px;background:#008b8b"></div><div class="sw" style="left:946.0px;width:10.5px;background:#00ffff"></div><div class="sw" style="left:956.5px;width:10.5px;background:#e0ffff"></div><div class="sw" style="left:967.0px;width:10.5px;background:#f0ffff"></div><div class="sw" style="left:977.5px;width:10.5px;background:#00ced1"></div><div class="sw" style="left:988.0px;width:10.5px;background:#5f9ea0"></div><div class="sw" style="left:998.5px;width:10.5px;background:#b0e0e6"></div><div class="sw" style="left:1009.0px;width:7.0px;background:#add8e6"></div>
<div class="sw" style="left:1px;width:10.5px;background:#fff"></div>
<svg style="left:1px;top:1px" width="11" height="11" viewBox="0 0 11 11"><path d="M.5 .5L10.5 10.5M10.5 .5L.5 10.5" stroke="#8a2a2a" stroke-width="1.1"/></svg>
<div class="a" style="left:0;top:1px;width:1px;height:11px;background:#777"></div>
<svg style="left:1017px;top:1px" width="5" height="6" viewBox="0 0 5 6"><path d="M4.5 0V6L0 3Z" fill="#111"/></svg>
</div>
<div id="pscroll" class="a">
<svg style="left:4px;top:2px" width="5" height="7" viewBox="0 0 5 7"><path d="M4 .5L1 3.5L4 6.5" fill="none" stroke="#aaa" stroke-width="1.1"/></svg>
<div class="a" style="left:13px;top:1px;width:684px;height:10px;background:#cdcdcd"></div>
<svg style="left:1008px;top:2px" width="5" height="7" viewBox="0 0 5 7"><path d="M1 .5L4 3.5L1 6.5" fill="none" stroke="#444" stroke-width="1.1"/></svg>
</div>
<div id="status" class="a">
<div class="t" style="left:2px;top:2px;color:#222">Fill:</div>
<div class="t" style="left:2px;top:12px;color:#222">Stroke:</div>
<div class="t" style="left:32px;top:2px;font-weight:bold;color:#111">a</div>
<div class="t" style="left:30px;top:12px;font-weight:bold;color:#111">m</div>
<div class="a" style="left:39px;top:1px;width:52px;height:10.5px;background:#700000"></div>
<div class="t" style="left:56px;top:12px;font-style:italic;color:#333">None</div>
<div class="t" style="left:95px;top:7px;color:#222">O:</div>
<div class="a" style="left:105px;top:3px;width:28px;height:15.5px;background:#fff;border:1px solid #adadad"></div>
<div class="t" style="left:108px;top:7px;color:#222">0</div>
<div class="a" style="left:133px;top:3px;width:7px;height:15.5px;background:#e6e6e6;border:1px solid #c4c4c4"></div>
<svg style="left:134px;top:5px" width="5" height="4" viewBox="0 0 5 4"><path d="M2.5 .5L5 3.5H0Z" fill="#999"/></svg>
<svg style="left:134px;top:13px" width="5" height="4" viewBox="0 0 5 4"><path d="M2.5 3.5L5 .5H0Z" fill="#111"/></svg>
<div class="sep" style="left:142px;top:0;height:22px;background:#c8c8c8"></div>
<svg style="left:148px;top:9px" width="8" height="6" viewBox="0 0 8 6"><ellipse cx="4" cy="3" rx="3.6" ry="2.5" fill="#555"/><circle cx="4" cy="3" r="1.2" fill="#ccc"/></svg>
<svg style="left:163px;top:8px" width="6" height="7" viewBox="0 0 6 7"><path d="M1.5 3V2a1.5 1.5 0 0 1 3 0" fill="none" stroke="#888" stroke-width=".8"/><rect x=".5" y="3" width="5" height="3.5" fill="#f0b030" stroke="#777" stroke-width=".5"/></svg>
<div class="a" style="left:173px;top:1px;width:52px;height:21px;background:#fff;border:1px solid #adadad;border-bottom:0"></div>
<div class="a" style="left:211px;top:1px;width:14px;height:21px;background:#e1e1e1;border:1px solid #adadad;border-bottom:0"></div>
<svg style="left:215px;top:10px" width="7" height="4" viewBox="0 0 7 4"><path d="M.5 .5L3.5 3.5L6.5 .5" fill="none" stroke="#555" stroke-width=".9"/></svg>
<div class="t" style="left:176px;top:7px;font-weight:bold;color:#111;font-size:7.9px">&bull;Layer 1</div>
<div class="t" style="left:226px;top:6px;color:#222;font-size:8.87px;line-height:12px;top:5px"><b style="font-size:10.5px">2</b> objects selected of types <b>Text</b>, <b>Circle</b> in layer <b>Layer 1</b>. Click selection to toggle scale/rotation handles.</div>
<div class="sep" style="left:918px;top:2px;height:20px;background:#c8c8c8"></div>
<div class="t" style="left:921px;top:3px;font-size:8.6px;color:#333">X:</div>
<div class="t" style="left:921px;top:13px;font-size:8.6px;color:#333">Y:</div>
<div class="t" style="left:940.5px;top:3px;font-family:'Liberation Mono';font-size:8.5px;color:#333">51.49</div>
<div class="t" style="left:935.4px;top:13px;font-family:'Liberation Mono';font-size:8.5px;color:#333">210.44</div>
<div class="t" style="left:973px;top:7px;color:#333">Z:</div>
<div class="a" style="left:981px;top:3.5px;width:35px;height:15px;background:#fff;border:1px solid #adadad"></div>
<div class="t" style="left:988.5px;top:7px;color:#333;font-size:8.8px">71%</div>
<div class="a" style="left:1016px;top:3.5px;width:7px;height:15px;background:#e6e6e6;border:1px solid #c4c4c4"></div>
<svg style="left:1017px;top:5.5px" width="5" height="4" viewBox="0 0 5 4"><path d="M2.5 .5L5 3.5H0Z" fill="#111"/></svg>
<svg style="left:1017px;top:12.5px" width="5" height="4" viewBox="0 0 5 4"><path d="M2.5 3.5L5 .5H0Z" fill="#111"/></svg>
</div>
</body></html>
